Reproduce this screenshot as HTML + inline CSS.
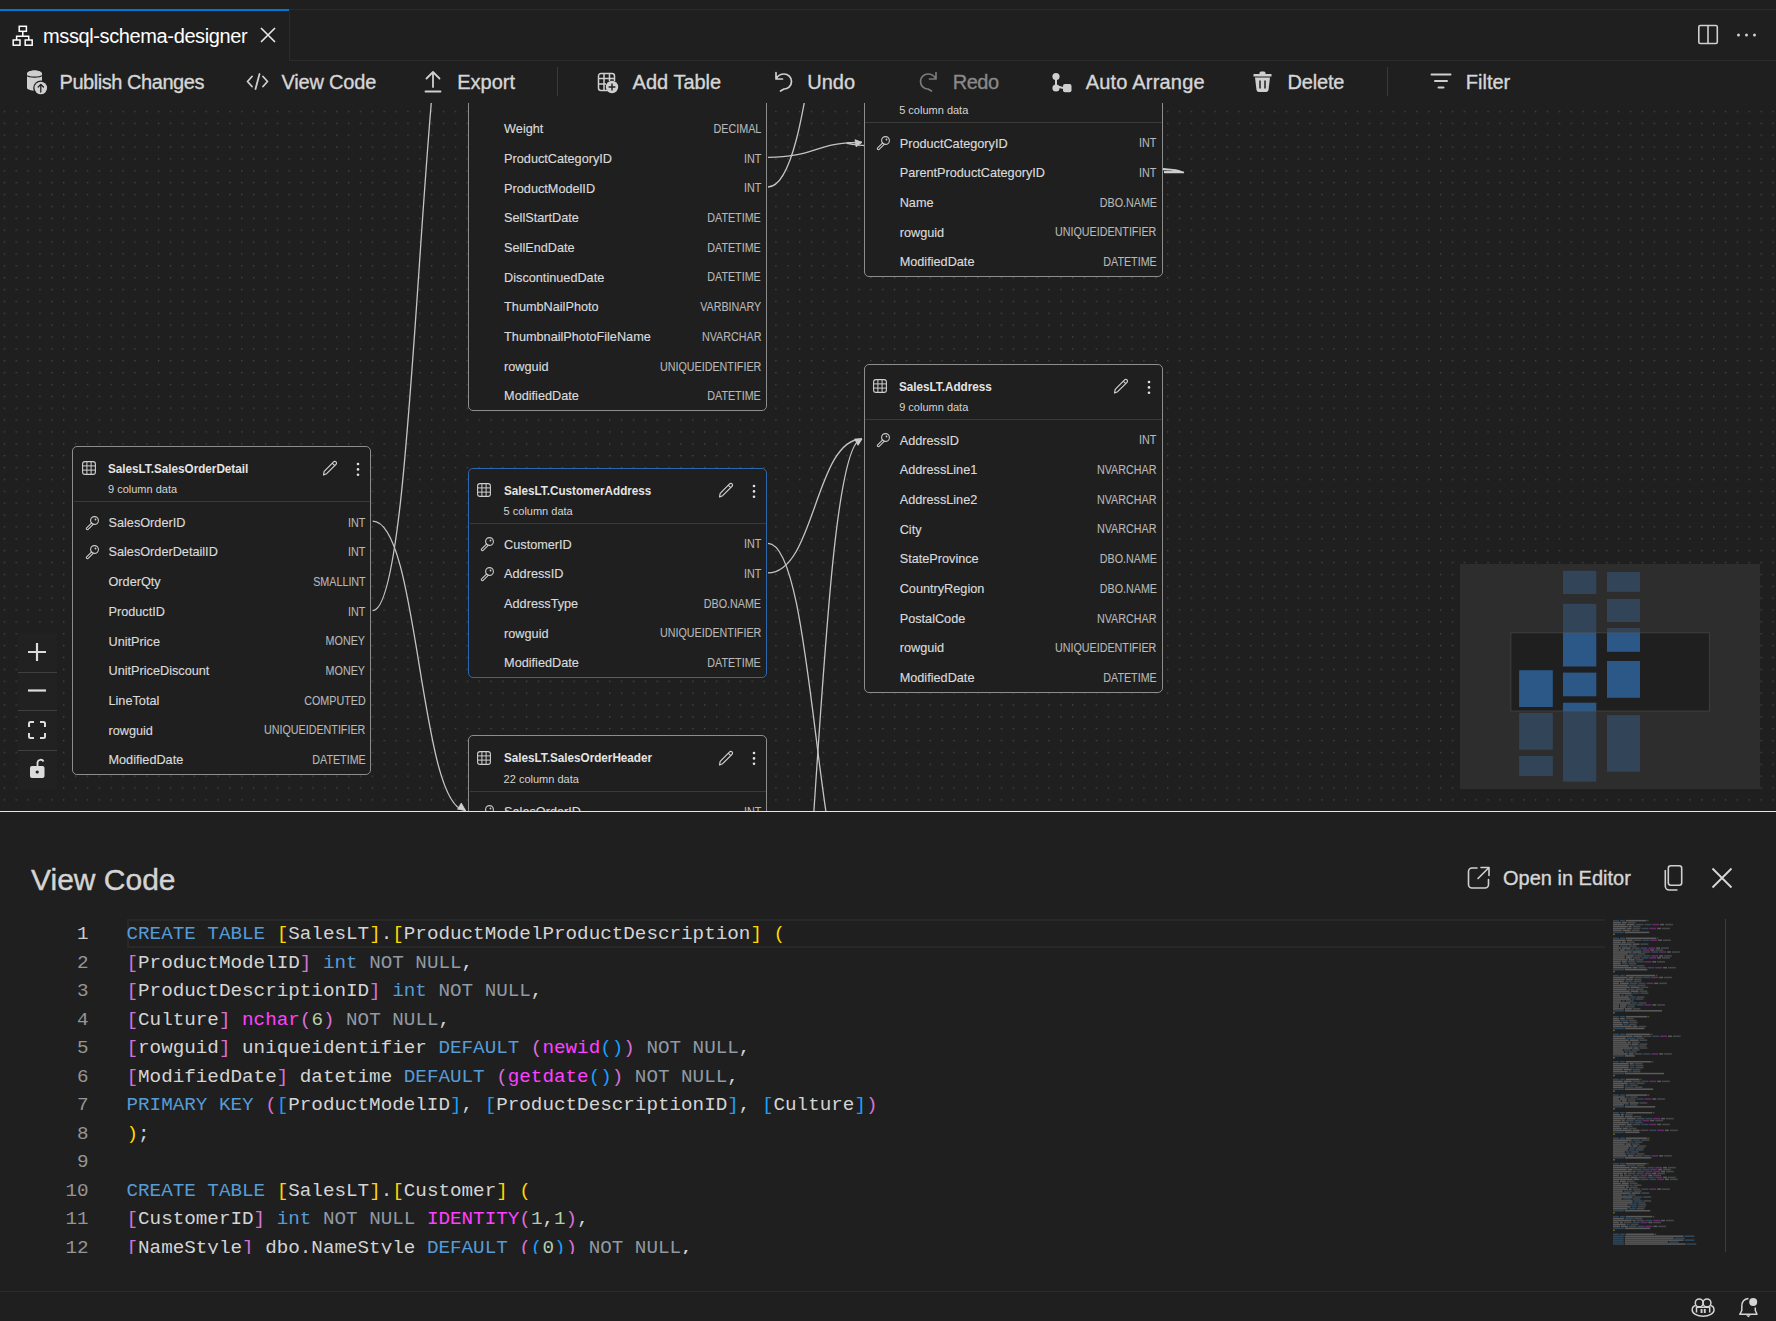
<!DOCTYPE html>
<html><head><meta charset="utf-8"><title>mssql-schema-designer</title>
<style>html,body{margin:0;padding:0}body{width:1776px;height:1321px;position:relative;overflow:hidden;background:#1f1f1f;font-family:'Liberation Sans',sans-serif}svg{overflow:visible}</style>
</head><body>
<div style="position:absolute;left:0;top:103px;width:1776px;height:708px;overflow:hidden;background:#1f1f1f">
<svg style="position:absolute;left:0;top:0" width="1776" height="708"><defs><pattern id="dots" x="3.70" y="7.80" width="11.87" height="11.87" patternUnits="userSpaceOnUse"><rect x="0.1" y="0.1" width="1.2" height="1.2" fill="#505050"/></pattern></defs><rect width="100%" height="100%" fill="url(#dots)"/></svg>
<svg style="position:absolute;left:0;top:0" width="1776" height="708"><path d="M372.7,418.20000000000005 C419.35,418.20000000000005 419.35,707.5 466,707.5" stroke="#c4c4c4" stroke-width="1.3" fill="none"/><path d="M372.7,507.6 C419.35,507.6 419.35,-183.3 466,-183.3" stroke="#c4c4c4" stroke-width="1.3" fill="none"/><path d="M768,54.30000000000001 C815.0,54.30000000000001 815.0,39.30000000000001 862,39.30000000000001" stroke="#c4c4c4" stroke-width="1.3" fill="none"/><path d="M862.00,39.30 L856.11,43.82 L855.04,36.70 Z" fill="#cfcfcf" stroke="#cfcfcf" stroke-width="0.8" stroke-linejoin="round"/><path d="M768,84 C816.0,84 816.0,-223 864,-223" stroke="#c4c4c4" stroke-width="1.3" fill="none"/><path d="M1164,68.69999999999999 C1272.6134199811422,68.69999999999999 753.3865800188577,39.30000000000001 862,39.30000000000001" stroke="#c4c4c4" stroke-width="1.3" fill="none"/><path d="M768,440.29999999999995 C816.0,440.29999999999995 816.0,827 864,827" stroke="#c4c4c4" stroke-width="1.3" fill="none"/><path d="M768,469.9 C815.0,469.9 815.0,336 862,336" stroke="#c4c4c4" stroke-width="1.3" fill="none"/><path d="M862.00,336.00 L858.04,342.29 L854.57,335.98 Z" fill="#cfcfcf" stroke="#cfcfcf" stroke-width="0.8" stroke-linejoin="round"/><path d="M768,1047 C815.0,1047 815.0,336 862,336" stroke="#c4c4c4" stroke-width="1.3" fill="none"/><path d="M465.00,706.50 L457.57,706.24 L461.28,700.07 Z" fill="#cfcfcf" stroke="#cfcfcf" stroke-width="0.8" stroke-linejoin="round"/></svg>
<div style="position:absolute;left:468.0px;top:-258.50px;width:296.6px;height:564.80px;border:1px solid #8d8d8d;border-radius:5px;background:#1f1f1f"></div>
<svg style="position:absolute;left:477.1px;top:-243.3px;" width="14" height="14" viewBox="0 0 14 14"><rect x="0.6" y="0.6" width="12.8" height="12.8" rx="2.4" fill="none" stroke="#d0d0d0" stroke-width="1.1"/><path d="M4.9,0.8 V13.2 M9.1,0.8 V13.2 M0.8,4.9 H13.2 M0.8,9.1 H13.2" stroke="#d0d0d0" stroke-width="1.0"/></svg>
<div style="position:absolute;top:-242.65px;font:700 13px 'Liberation Sans',sans-serif;line-height:1;color:#e4e4e4;white-space:pre;left:503.60px;transform:scaleX(0.9);transform-origin:0 50%;">SalesLT.Product</div>
<div style="position:absolute;top:-220.15px;font:400 11px 'Liberation Sans',sans-serif;line-height:1;color:#d4d4d4;white-space:pre;left:503.60px;">17 column data</div>
<div style="position:absolute;left:469.6px;top:-203.30px;width:296px;height:1px;background:#3a3a3a;"></div>
<svg style="position:absolute;left:717.6px;top:-244.3px;" width="17" height="17" viewBox="0 0 17 17"><path d="M1.5,15 L2.2,11.3 L11.6,1.9 A1.6,1.6 0 0 1 14,4.3 L4.6,13.7 Z M10.3,3.2 L12.7,5.6" fill="none" stroke="#d0d0d0" stroke-width="1.2" stroke-linejoin="round"/></svg>
<svg style="position:absolute;left:751.6px;top:-242.8px;" width="4" height="15" viewBox="0 0 4 15"><circle cx="2" cy="2" r="1.3" fill="#e0e0e0"/><circle cx="2" cy="7.4" r="1.3" fill="#e0e0e0"/><circle cx="2" cy="12.8" r="1.3" fill="#e0e0e0"/></svg>
<div style="position:absolute;top:20.11px;font:400 12.7px 'Liberation Sans',sans-serif;line-height:1;color:#dadada;white-space:pre;left:504.10px;-webkit-text-stroke:0.15px #dadada;">Weight</div>
<div style="position:absolute;top:19.90px;font:400 12px 'Liberation Sans',sans-serif;line-height:1;color:#b8b8b8;white-space:pre;right:1014.90px;transform:scaleX(0.895);transform-origin:100% 50%;-webkit-text-stroke:0.1px #b8b8b8;">DECIMAL</div>
<div style="position:absolute;top:49.80px;font:400 12.7px 'Liberation Sans',sans-serif;line-height:1;color:#dadada;white-space:pre;left:504.10px;-webkit-text-stroke:0.15px #dadada;">ProductCategoryID</div>
<div style="position:absolute;top:49.60px;font:400 12px 'Liberation Sans',sans-serif;line-height:1;color:#b8b8b8;white-space:pre;right:1014.90px;transform:scaleX(0.895);transform-origin:100% 50%;-webkit-text-stroke:0.1px #b8b8b8;">INT</div>
<div style="position:absolute;top:79.51px;font:400 12.7px 'Liberation Sans',sans-serif;line-height:1;color:#dadada;white-space:pre;left:504.10px;-webkit-text-stroke:0.15px #dadada;">ProductModelID</div>
<div style="position:absolute;top:79.30px;font:400 12px 'Liberation Sans',sans-serif;line-height:1;color:#b8b8b8;white-space:pre;right:1014.90px;transform:scaleX(0.895);transform-origin:100% 50%;-webkit-text-stroke:0.1px #b8b8b8;">INT</div>
<div style="position:absolute;top:109.20px;font:400 12.7px 'Liberation Sans',sans-serif;line-height:1;color:#dadada;white-space:pre;left:504.10px;-webkit-text-stroke:0.15px #dadada;">SellStartDate</div>
<div style="position:absolute;top:109.00px;font:400 12px 'Liberation Sans',sans-serif;line-height:1;color:#b8b8b8;white-space:pre;right:1014.90px;transform:scaleX(0.895);transform-origin:100% 50%;-webkit-text-stroke:0.1px #b8b8b8;">DATETIME</div>
<div style="position:absolute;top:138.91px;font:400 12.7px 'Liberation Sans',sans-serif;line-height:1;color:#dadada;white-space:pre;left:504.10px;-webkit-text-stroke:0.15px #dadada;">SellEndDate</div>
<div style="position:absolute;top:138.70px;font:400 12px 'Liberation Sans',sans-serif;line-height:1;color:#b8b8b8;white-space:pre;right:1014.90px;transform:scaleX(0.895);transform-origin:100% 50%;-webkit-text-stroke:0.1px #b8b8b8;">DATETIME</div>
<div style="position:absolute;top:168.60px;font:400 12.7px 'Liberation Sans',sans-serif;line-height:1;color:#dadada;white-space:pre;left:504.10px;-webkit-text-stroke:0.15px #dadada;">DiscontinuedDate</div>
<div style="position:absolute;top:168.40px;font:400 12px 'Liberation Sans',sans-serif;line-height:1;color:#b8b8b8;white-space:pre;right:1014.90px;transform:scaleX(0.895);transform-origin:100% 50%;-webkit-text-stroke:0.1px #b8b8b8;">DATETIME</div>
<div style="position:absolute;top:198.30px;font:400 12.7px 'Liberation Sans',sans-serif;line-height:1;color:#dadada;white-space:pre;left:504.10px;-webkit-text-stroke:0.15px #dadada;">ThumbNailPhoto</div>
<div style="position:absolute;top:198.10px;font:400 12px 'Liberation Sans',sans-serif;line-height:1;color:#b8b8b8;white-space:pre;right:1014.90px;transform:scaleX(0.895);transform-origin:100% 50%;-webkit-text-stroke:0.1px #b8b8b8;">VARBINARY</div>
<div style="position:absolute;top:228.01px;font:400 12.7px 'Liberation Sans',sans-serif;line-height:1;color:#dadada;white-space:pre;left:504.10px;-webkit-text-stroke:0.15px #dadada;">ThumbnailPhotoFileName</div>
<div style="position:absolute;top:227.80px;font:400 12px 'Liberation Sans',sans-serif;line-height:1;color:#b8b8b8;white-space:pre;right:1014.90px;transform:scaleX(0.895);transform-origin:100% 50%;-webkit-text-stroke:0.1px #b8b8b8;">NVARCHAR</div>
<div style="position:absolute;top:257.70px;font:400 12.7px 'Liberation Sans',sans-serif;line-height:1;color:#dadada;white-space:pre;left:504.10px;-webkit-text-stroke:0.15px #dadada;">rowguid</div>
<div style="position:absolute;top:257.50px;font:400 12px 'Liberation Sans',sans-serif;line-height:1;color:#b8b8b8;white-space:pre;right:1014.90px;transform:scaleX(0.895);transform-origin:100% 50%;-webkit-text-stroke:0.1px #b8b8b8;">UNIQUEIDENTIFIER</div>
<div style="position:absolute;top:287.40px;font:400 12.7px 'Liberation Sans',sans-serif;line-height:1;color:#dadada;white-space:pre;left:504.10px;-webkit-text-stroke:0.15px #dadada;">ModifiedDate</div>
<div style="position:absolute;top:287.20px;font:400 12px 'Liberation Sans',sans-serif;line-height:1;color:#b8b8b8;white-space:pre;right:1014.90px;transform:scaleX(0.895);transform-origin:100% 50%;-webkit-text-stroke:0.1px #b8b8b8;">DATETIME</div>
<div style="position:absolute;left:864.2px;top:-36.20px;width:296.5px;height:208.40px;border:1px solid #8d8d8d;border-radius:5px;background:#1f1f1f"></div>
<svg style="position:absolute;left:872.7px;top:-21.0px;" width="14" height="14" viewBox="0 0 14 14"><rect x="0.6" y="0.6" width="12.8" height="12.8" rx="2.4" fill="none" stroke="#d0d0d0" stroke-width="1.1"/><path d="M4.9,0.8 V13.2 M9.1,0.8 V13.2 M0.8,4.9 H13.2 M0.8,9.1 H13.2" stroke="#d0d0d0" stroke-width="1.0"/></svg>
<div style="position:absolute;top:-20.35px;font:700 13px 'Liberation Sans',sans-serif;line-height:1;color:#e4e4e4;white-space:pre;left:899.20px;transform:scaleX(0.9);transform-origin:0 50%;">SalesLT.ProductCategory</div>
<div style="position:absolute;top:2.15px;font:400 11px 'Liberation Sans',sans-serif;line-height:1;color:#d4d4d4;white-space:pre;left:899.20px;">5 column data</div>
<div style="position:absolute;left:865.2px;top:19.00px;width:296.5px;height:1px;background:#3a3a3a;"></div>
<svg style="position:absolute;left:1113.2px;top:-22.0px;" width="17" height="17" viewBox="0 0 17 17"><path d="M1.5,15 L2.2,11.3 L11.6,1.9 A1.6,1.6 0 0 1 14,4.3 L4.6,13.7 Z M10.3,3.2 L12.7,5.6" fill="none" stroke="#d0d0d0" stroke-width="1.2" stroke-linejoin="round"/></svg>
<svg style="position:absolute;left:1147.2px;top:-20.5px;" width="4" height="15" viewBox="0 0 4 15"><circle cx="2" cy="2" r="1.3" fill="#e0e0e0"/><circle cx="2" cy="7.4" r="1.3" fill="#e0e0e0"/><circle cx="2" cy="12.8" r="1.3" fill="#e0e0e0"/></svg>
<svg style="position:absolute;left:875.7px;top:33.3px;" width="14" height="14" viewBox="0 0 14 14"><g fill="none" stroke="#cacaca" stroke-width="1.1" stroke-linecap="round" stroke-linejoin="round"><circle cx="9.5" cy="4.5" r="3.9"/><path d="M6.7,6.9 L1.4,12.2 A1.1,1.1 0 0 0 2.9,13.6 L8.2,8.4"/></g><circle cx="10.5" cy="3.5" r="0.9" fill="#cacaca"/></svg>
<div style="position:absolute;top:34.50px;font:400 12.7px 'Liberation Sans',sans-serif;line-height:1;color:#dadada;white-space:pre;left:899.70px;-webkit-text-stroke:0.15px #dadada;">ProductCategoryID</div>
<div style="position:absolute;top:34.30px;font:400 12px 'Liberation Sans',sans-serif;line-height:1;color:#b8b8b8;white-space:pre;right:619.30px;transform:scaleX(0.895);transform-origin:100% 50%;-webkit-text-stroke:0.1px #b8b8b8;">INT</div>
<div style="position:absolute;top:64.20px;font:400 12.7px 'Liberation Sans',sans-serif;line-height:1;color:#dadada;white-space:pre;left:899.70px;-webkit-text-stroke:0.15px #dadada;">ParentProductCategoryID</div>
<div style="position:absolute;top:64.00px;font:400 12px 'Liberation Sans',sans-serif;line-height:1;color:#b8b8b8;white-space:pre;right:619.30px;transform:scaleX(0.895);transform-origin:100% 50%;-webkit-text-stroke:0.1px #b8b8b8;">INT</div>
<div style="position:absolute;top:93.90px;font:400 12.7px 'Liberation Sans',sans-serif;line-height:1;color:#dadada;white-space:pre;left:899.70px;-webkit-text-stroke:0.15px #dadada;">Name</div>
<div style="position:absolute;top:93.70px;font:400 12px 'Liberation Sans',sans-serif;line-height:1;color:#b8b8b8;white-space:pre;right:619.30px;transform:scaleX(0.895);transform-origin:100% 50%;-webkit-text-stroke:0.1px #b8b8b8;">DBO.NAME</div>
<div style="position:absolute;top:123.60px;font:400 12.7px 'Liberation Sans',sans-serif;line-height:1;color:#dadada;white-space:pre;left:899.70px;-webkit-text-stroke:0.15px #dadada;">rowguid</div>
<div style="position:absolute;top:123.40px;font:400 12px 'Liberation Sans',sans-serif;line-height:1;color:#b8b8b8;white-space:pre;right:619.30px;transform:scaleX(0.895);transform-origin:100% 50%;-webkit-text-stroke:0.1px #b8b8b8;">UNIQUEIDENTIFIER</div>
<div style="position:absolute;top:153.31px;font:400 12.7px 'Liberation Sans',sans-serif;line-height:1;color:#dadada;white-space:pre;left:899.70px;-webkit-text-stroke:0.15px #dadada;">ModifiedDate</div>
<div style="position:absolute;top:153.10px;font:400 12px 'Liberation Sans',sans-serif;line-height:1;color:#b8b8b8;white-space:pre;right:619.30px;transform:scaleX(0.895);transform-origin:100% 50%;-webkit-text-stroke:0.1px #b8b8b8;">DATETIME</div>
<div style="position:absolute;left:864.2px;top:260.80px;width:296.5px;height:327.20px;border:1px solid #8d8d8d;border-radius:5px;background:#1f1f1f"></div>
<svg style="position:absolute;left:872.7px;top:276.0px;" width="14" height="14" viewBox="0 0 14 14"><rect x="0.6" y="0.6" width="12.8" height="12.8" rx="2.4" fill="none" stroke="#d0d0d0" stroke-width="1.1"/><path d="M4.9,0.8 V13.2 M9.1,0.8 V13.2 M0.8,4.9 H13.2 M0.8,9.1 H13.2" stroke="#d0d0d0" stroke-width="1.0"/></svg>
<div style="position:absolute;top:276.65px;font:700 13px 'Liberation Sans',sans-serif;line-height:1;color:#e4e4e4;white-space:pre;left:899.20px;transform:scaleX(0.9);transform-origin:0 50%;">SalesLT.Address</div>
<div style="position:absolute;top:299.15px;font:400 11px 'Liberation Sans',sans-serif;line-height:1;color:#d4d4d4;white-space:pre;left:899.20px;">9 column data</div>
<div style="position:absolute;left:865.2px;top:316.00px;width:296.5px;height:1px;background:#3a3a3a;"></div>
<svg style="position:absolute;left:1113.2px;top:275.0px;" width="17" height="17" viewBox="0 0 17 17"><path d="M1.5,15 L2.2,11.3 L11.6,1.9 A1.6,1.6 0 0 1 14,4.3 L4.6,13.7 Z M10.3,3.2 L12.7,5.6" fill="none" stroke="#d0d0d0" stroke-width="1.2" stroke-linejoin="round"/></svg>
<svg style="position:absolute;left:1147.2px;top:276.5px;" width="4" height="15" viewBox="0 0 4 15"><circle cx="2" cy="2" r="1.3" fill="#e0e0e0"/><circle cx="2" cy="7.4" r="1.3" fill="#e0e0e0"/><circle cx="2" cy="12.8" r="1.3" fill="#e0e0e0"/></svg>
<svg style="position:absolute;left:875.7px;top:330.3px;" width="14" height="14" viewBox="0 0 14 14"><g fill="none" stroke="#cacaca" stroke-width="1.1" stroke-linecap="round" stroke-linejoin="round"><circle cx="9.5" cy="4.5" r="3.9"/><path d="M6.7,6.9 L1.4,12.2 A1.1,1.1 0 0 0 2.9,13.6 L8.2,8.4"/></g><circle cx="10.5" cy="3.5" r="0.9" fill="#cacaca"/></svg>
<div style="position:absolute;top:331.50px;font:400 12.7px 'Liberation Sans',sans-serif;line-height:1;color:#dadada;white-space:pre;left:899.70px;-webkit-text-stroke:0.15px #dadada;">AddressID</div>
<div style="position:absolute;top:331.30px;font:400 12px 'Liberation Sans',sans-serif;line-height:1;color:#b8b8b8;white-space:pre;right:619.30px;transform:scaleX(0.895);transform-origin:100% 50%;-webkit-text-stroke:0.1px #b8b8b8;">INT</div>
<div style="position:absolute;top:361.20px;font:400 12.7px 'Liberation Sans',sans-serif;line-height:1;color:#dadada;white-space:pre;left:899.70px;-webkit-text-stroke:0.15px #dadada;">AddressLine1</div>
<div style="position:absolute;top:361.00px;font:400 12px 'Liberation Sans',sans-serif;line-height:1;color:#b8b8b8;white-space:pre;right:619.30px;transform:scaleX(0.895);transform-origin:100% 50%;-webkit-text-stroke:0.1px #b8b8b8;">NVARCHAR</div>
<div style="position:absolute;top:390.90px;font:400 12.7px 'Liberation Sans',sans-serif;line-height:1;color:#dadada;white-space:pre;left:899.70px;-webkit-text-stroke:0.15px #dadada;">AddressLine2</div>
<div style="position:absolute;top:390.70px;font:400 12px 'Liberation Sans',sans-serif;line-height:1;color:#b8b8b8;white-space:pre;right:619.30px;transform:scaleX(0.895);transform-origin:100% 50%;-webkit-text-stroke:0.1px #b8b8b8;">NVARCHAR</div>
<div style="position:absolute;top:420.60px;font:400 12.7px 'Liberation Sans',sans-serif;line-height:1;color:#dadada;white-space:pre;left:899.70px;-webkit-text-stroke:0.15px #dadada;">City</div>
<div style="position:absolute;top:420.40px;font:400 12px 'Liberation Sans',sans-serif;line-height:1;color:#b8b8b8;white-space:pre;right:619.30px;transform:scaleX(0.895);transform-origin:100% 50%;-webkit-text-stroke:0.1px #b8b8b8;">NVARCHAR</div>
<div style="position:absolute;top:450.31px;font:400 12.7px 'Liberation Sans',sans-serif;line-height:1;color:#dadada;white-space:pre;left:899.70px;-webkit-text-stroke:0.15px #dadada;">StateProvince</div>
<div style="position:absolute;top:450.10px;font:400 12px 'Liberation Sans',sans-serif;line-height:1;color:#b8b8b8;white-space:pre;right:619.30px;transform:scaleX(0.895);transform-origin:100% 50%;-webkit-text-stroke:0.1px #b8b8b8;">DBO.NAME</div>
<div style="position:absolute;top:480.00px;font:400 12.7px 'Liberation Sans',sans-serif;line-height:1;color:#dadada;white-space:pre;left:899.70px;-webkit-text-stroke:0.15px #dadada;">CountryRegion</div>
<div style="position:absolute;top:479.80px;font:400 12px 'Liberation Sans',sans-serif;line-height:1;color:#b8b8b8;white-space:pre;right:619.30px;transform:scaleX(0.895);transform-origin:100% 50%;-webkit-text-stroke:0.1px #b8b8b8;">DBO.NAME</div>
<div style="position:absolute;top:509.70px;font:400 12.7px 'Liberation Sans',sans-serif;line-height:1;color:#dadada;white-space:pre;left:899.70px;-webkit-text-stroke:0.15px #dadada;">PostalCode</div>
<div style="position:absolute;top:509.50px;font:400 12px 'Liberation Sans',sans-serif;line-height:1;color:#b8b8b8;white-space:pre;right:619.30px;transform:scaleX(0.895);transform-origin:100% 50%;-webkit-text-stroke:0.1px #b8b8b8;">NVARCHAR</div>
<div style="position:absolute;top:539.41px;font:400 12.7px 'Liberation Sans',sans-serif;line-height:1;color:#dadada;white-space:pre;left:899.70px;-webkit-text-stroke:0.15px #dadada;">rowguid</div>
<div style="position:absolute;top:539.20px;font:400 12px 'Liberation Sans',sans-serif;line-height:1;color:#b8b8b8;white-space:pre;right:619.30px;transform:scaleX(0.895);transform-origin:100% 50%;-webkit-text-stroke:0.1px #b8b8b8;">UNIQUEIDENTIFIER</div>
<div style="position:absolute;top:569.11px;font:400 12.7px 'Liberation Sans',sans-serif;line-height:1;color:#dadada;white-space:pre;left:899.70px;-webkit-text-stroke:0.15px #dadada;">ModifiedDate</div>
<div style="position:absolute;top:568.90px;font:400 12px 'Liberation Sans',sans-serif;line-height:1;color:#b8b8b8;white-space:pre;right:619.30px;transform:scaleX(0.895);transform-origin:100% 50%;-webkit-text-stroke:0.1px #b8b8b8;">DATETIME</div>
<div style="position:absolute;left:72.4px;top:343.00px;width:296.6px;height:327.20px;border:1px solid #8d8d8d;border-radius:5px;background:#1f1f1f"></div>
<svg style="position:absolute;left:81.5px;top:358.2px;" width="14" height="14" viewBox="0 0 14 14"><rect x="0.6" y="0.6" width="12.8" height="12.8" rx="2.4" fill="none" stroke="#d0d0d0" stroke-width="1.1"/><path d="M4.9,0.8 V13.2 M9.1,0.8 V13.2 M0.8,4.9 H13.2 M0.8,9.1 H13.2" stroke="#d0d0d0" stroke-width="1.0"/></svg>
<div style="position:absolute;top:358.85px;font:700 13px 'Liberation Sans',sans-serif;line-height:1;color:#e4e4e4;white-space:pre;left:108.00px;transform:scaleX(0.9);transform-origin:0 50%;">SalesLT.SalesOrderDetail</div>
<div style="position:absolute;top:381.35px;font:400 11px 'Liberation Sans',sans-serif;line-height:1;color:#d4d4d4;white-space:pre;left:108.00px;">9 column data</div>
<div style="position:absolute;left:74px;top:398.20px;width:296px;height:1px;background:#3a3a3a;"></div>
<svg style="position:absolute;left:322px;top:357.2px;" width="17" height="17" viewBox="0 0 17 17"><path d="M1.5,15 L2.2,11.3 L11.6,1.9 A1.6,1.6 0 0 1 14,4.3 L4.6,13.7 Z M10.3,3.2 L12.7,5.6" fill="none" stroke="#d0d0d0" stroke-width="1.2" stroke-linejoin="round"/></svg>
<svg style="position:absolute;left:356px;top:358.7px;" width="4" height="15" viewBox="0 0 4 15"><circle cx="2" cy="2" r="1.3" fill="#e0e0e0"/><circle cx="2" cy="7.4" r="1.3" fill="#e0e0e0"/><circle cx="2" cy="12.8" r="1.3" fill="#e0e0e0"/></svg>
<svg style="position:absolute;left:84.5px;top:412.5px;" width="14" height="14" viewBox="0 0 14 14"><g fill="none" stroke="#cacaca" stroke-width="1.1" stroke-linecap="round" stroke-linejoin="round"><circle cx="9.5" cy="4.5" r="3.9"/><path d="M6.7,6.9 L1.4,12.2 A1.1,1.1 0 0 0 2.9,13.6 L8.2,8.4"/></g><circle cx="10.5" cy="3.5" r="0.9" fill="#cacaca"/></svg>
<div style="position:absolute;top:413.70px;font:400 12.7px 'Liberation Sans',sans-serif;line-height:1;color:#dadada;white-space:pre;left:108.50px;-webkit-text-stroke:0.15px #dadada;">SalesOrderID</div>
<div style="position:absolute;top:413.50px;font:400 12px 'Liberation Sans',sans-serif;line-height:1;color:#b8b8b8;white-space:pre;right:1410.50px;transform:scaleX(0.895);transform-origin:100% 50%;-webkit-text-stroke:0.1px #b8b8b8;">INT</div>
<svg style="position:absolute;left:84.5px;top:442.2px;" width="14" height="14" viewBox="0 0 14 14"><g fill="none" stroke="#cacaca" stroke-width="1.1" stroke-linecap="round" stroke-linejoin="round"><circle cx="9.5" cy="4.5" r="3.9"/><path d="M6.7,6.9 L1.4,12.2 A1.1,1.1 0 0 0 2.9,13.6 L8.2,8.4"/></g><circle cx="10.5" cy="3.5" r="0.9" fill="#cacaca"/></svg>
<div style="position:absolute;top:443.40px;font:400 12.7px 'Liberation Sans',sans-serif;line-height:1;color:#dadada;white-space:pre;left:108.50px;-webkit-text-stroke:0.15px #dadada;">SalesOrderDetailID</div>
<div style="position:absolute;top:443.20px;font:400 12px 'Liberation Sans',sans-serif;line-height:1;color:#b8b8b8;white-space:pre;right:1410.50px;transform:scaleX(0.895);transform-origin:100% 50%;-webkit-text-stroke:0.1px #b8b8b8;">INT</div>
<div style="position:absolute;top:473.10px;font:400 12.7px 'Liberation Sans',sans-serif;line-height:1;color:#dadada;white-space:pre;left:108.50px;-webkit-text-stroke:0.15px #dadada;">OrderQty</div>
<div style="position:absolute;top:472.90px;font:400 12px 'Liberation Sans',sans-serif;line-height:1;color:#b8b8b8;white-space:pre;right:1410.50px;transform:scaleX(0.895);transform-origin:100% 50%;-webkit-text-stroke:0.1px #b8b8b8;">SMALLINT</div>
<div style="position:absolute;top:502.81px;font:400 12.7px 'Liberation Sans',sans-serif;line-height:1;color:#dadada;white-space:pre;left:108.50px;-webkit-text-stroke:0.15px #dadada;">ProductID</div>
<div style="position:absolute;top:502.60px;font:400 12px 'Liberation Sans',sans-serif;line-height:1;color:#b8b8b8;white-space:pre;right:1410.50px;transform:scaleX(0.895);transform-origin:100% 50%;-webkit-text-stroke:0.1px #b8b8b8;">INT</div>
<div style="position:absolute;top:532.50px;font:400 12.7px 'Liberation Sans',sans-serif;line-height:1;color:#dadada;white-space:pre;left:108.50px;-webkit-text-stroke:0.15px #dadada;">UnitPrice</div>
<div style="position:absolute;top:532.30px;font:400 12px 'Liberation Sans',sans-serif;line-height:1;color:#b8b8b8;white-space:pre;right:1410.50px;transform:scaleX(0.895);transform-origin:100% 50%;-webkit-text-stroke:0.1px #b8b8b8;">MONEY</div>
<div style="position:absolute;top:562.21px;font:400 12.7px 'Liberation Sans',sans-serif;line-height:1;color:#dadada;white-space:pre;left:108.50px;-webkit-text-stroke:0.15px #dadada;">UnitPriceDiscount</div>
<div style="position:absolute;top:562.00px;font:400 12px 'Liberation Sans',sans-serif;line-height:1;color:#b8b8b8;white-space:pre;right:1410.50px;transform:scaleX(0.895);transform-origin:100% 50%;-webkit-text-stroke:0.1px #b8b8b8;">MONEY</div>
<div style="position:absolute;top:591.91px;font:400 12.7px 'Liberation Sans',sans-serif;line-height:1;color:#dadada;white-space:pre;left:108.50px;-webkit-text-stroke:0.15px #dadada;">LineTotal</div>
<div style="position:absolute;top:591.70px;font:400 12px 'Liberation Sans',sans-serif;line-height:1;color:#b8b8b8;white-space:pre;right:1410.50px;transform:scaleX(0.895);transform-origin:100% 50%;-webkit-text-stroke:0.1px #b8b8b8;">COMPUTED</div>
<div style="position:absolute;top:621.61px;font:400 12.7px 'Liberation Sans',sans-serif;line-height:1;color:#dadada;white-space:pre;left:108.50px;-webkit-text-stroke:0.15px #dadada;">rowguid</div>
<div style="position:absolute;top:621.40px;font:400 12px 'Liberation Sans',sans-serif;line-height:1;color:#b8b8b8;white-space:pre;right:1410.50px;transform:scaleX(0.895);transform-origin:100% 50%;-webkit-text-stroke:0.1px #b8b8b8;">UNIQUEIDENTIFIER</div>
<div style="position:absolute;top:651.31px;font:400 12.7px 'Liberation Sans',sans-serif;line-height:1;color:#dadada;white-space:pre;left:108.50px;-webkit-text-stroke:0.15px #dadada;">ModifiedDate</div>
<div style="position:absolute;top:651.10px;font:400 12px 'Liberation Sans',sans-serif;line-height:1;color:#b8b8b8;white-space:pre;right:1410.50px;transform:scaleX(0.895);transform-origin:100% 50%;-webkit-text-stroke:0.1px #b8b8b8;">DATETIME</div>
<div style="position:absolute;left:468.0px;top:364.80px;width:296.6px;height:208.40px;border:1px solid #2b68ad;border-radius:5px;background:#1f1f1f"></div>
<svg style="position:absolute;left:477.1px;top:380.0px;" width="14" height="14" viewBox="0 0 14 14"><rect x="0.6" y="0.6" width="12.8" height="12.8" rx="2.4" fill="none" stroke="#d0d0d0" stroke-width="1.1"/><path d="M4.9,0.8 V13.2 M9.1,0.8 V13.2 M0.8,4.9 H13.2 M0.8,9.1 H13.2" stroke="#d0d0d0" stroke-width="1.0"/></svg>
<div style="position:absolute;top:380.65px;font:700 13px 'Liberation Sans',sans-serif;line-height:1;color:#e4e4e4;white-space:pre;left:503.60px;transform:scaleX(0.9);transform-origin:0 50%;">SalesLT.CustomerAddress</div>
<div style="position:absolute;top:403.15px;font:400 11px 'Liberation Sans',sans-serif;line-height:1;color:#d4d4d4;white-space:pre;left:503.60px;">5 column data</div>
<div style="position:absolute;left:469.6px;top:420.00px;width:296px;height:1px;background:#3a3a3a;"></div>
<svg style="position:absolute;left:717.6px;top:379.0px;" width="17" height="17" viewBox="0 0 17 17"><path d="M1.5,15 L2.2,11.3 L11.6,1.9 A1.6,1.6 0 0 1 14,4.3 L4.6,13.7 Z M10.3,3.2 L12.7,5.6" fill="none" stroke="#d0d0d0" stroke-width="1.2" stroke-linejoin="round"/></svg>
<svg style="position:absolute;left:751.6px;top:380.5px;" width="4" height="15" viewBox="0 0 4 15"><circle cx="2" cy="2" r="1.3" fill="#e0e0e0"/><circle cx="2" cy="7.4" r="1.3" fill="#e0e0e0"/><circle cx="2" cy="12.8" r="1.3" fill="#e0e0e0"/></svg>
<svg style="position:absolute;left:480.1px;top:434.3px;" width="14" height="14" viewBox="0 0 14 14"><g fill="none" stroke="#cacaca" stroke-width="1.1" stroke-linecap="round" stroke-linejoin="round"><circle cx="9.5" cy="4.5" r="3.9"/><path d="M6.7,6.9 L1.4,12.2 A1.1,1.1 0 0 0 2.9,13.6 L8.2,8.4"/></g><circle cx="10.5" cy="3.5" r="0.9" fill="#cacaca"/></svg>
<div style="position:absolute;top:435.50px;font:400 12.7px 'Liberation Sans',sans-serif;line-height:1;color:#dadada;white-space:pre;left:504.10px;-webkit-text-stroke:0.15px #dadada;">CustomerID</div>
<div style="position:absolute;top:435.30px;font:400 12px 'Liberation Sans',sans-serif;line-height:1;color:#b8b8b8;white-space:pre;right:1014.90px;transform:scaleX(0.895);transform-origin:100% 50%;-webkit-text-stroke:0.1px #b8b8b8;">INT</div>
<svg style="position:absolute;left:480.1px;top:464.0px;" width="14" height="14" viewBox="0 0 14 14"><g fill="none" stroke="#cacaca" stroke-width="1.1" stroke-linecap="round" stroke-linejoin="round"><circle cx="9.5" cy="4.5" r="3.9"/><path d="M6.7,6.9 L1.4,12.2 A1.1,1.1 0 0 0 2.9,13.6 L8.2,8.4"/></g><circle cx="10.5" cy="3.5" r="0.9" fill="#cacaca"/></svg>
<div style="position:absolute;top:465.20px;font:400 12.7px 'Liberation Sans',sans-serif;line-height:1;color:#dadada;white-space:pre;left:504.10px;-webkit-text-stroke:0.15px #dadada;">AddressID</div>
<div style="position:absolute;top:465.00px;font:400 12px 'Liberation Sans',sans-serif;line-height:1;color:#b8b8b8;white-space:pre;right:1014.90px;transform:scaleX(0.895);transform-origin:100% 50%;-webkit-text-stroke:0.1px #b8b8b8;">INT</div>
<div style="position:absolute;top:494.90px;font:400 12.7px 'Liberation Sans',sans-serif;line-height:1;color:#dadada;white-space:pre;left:504.10px;-webkit-text-stroke:0.15px #dadada;">AddressType</div>
<div style="position:absolute;top:494.70px;font:400 12px 'Liberation Sans',sans-serif;line-height:1;color:#b8b8b8;white-space:pre;right:1014.90px;transform:scaleX(0.895);transform-origin:100% 50%;-webkit-text-stroke:0.1px #b8b8b8;">DBO.NAME</div>
<div style="position:absolute;top:524.61px;font:400 12.7px 'Liberation Sans',sans-serif;line-height:1;color:#dadada;white-space:pre;left:504.10px;-webkit-text-stroke:0.15px #dadada;">rowguid</div>
<div style="position:absolute;top:524.40px;font:400 12px 'Liberation Sans',sans-serif;line-height:1;color:#b8b8b8;white-space:pre;right:1014.90px;transform:scaleX(0.895);transform-origin:100% 50%;-webkit-text-stroke:0.1px #b8b8b8;">UNIQUEIDENTIFIER</div>
<div style="position:absolute;top:554.31px;font:400 12.7px 'Liberation Sans',sans-serif;line-height:1;color:#dadada;white-space:pre;left:504.10px;-webkit-text-stroke:0.15px #dadada;">ModifiedDate</div>
<div style="position:absolute;top:554.10px;font:400 12px 'Liberation Sans',sans-serif;line-height:1;color:#b8b8b8;white-space:pre;right:1014.90px;transform:scaleX(0.895);transform-origin:100% 50%;-webkit-text-stroke:0.1px #b8b8b8;">DATETIME</div>
<div style="position:absolute;left:468.0px;top:632.30px;width:296.6px;height:119.30px;border:1px solid #8d8d8d;border-radius:5px;background:#1f1f1f"></div>
<svg style="position:absolute;left:477.1px;top:647.5px;" width="14" height="14" viewBox="0 0 14 14"><rect x="0.6" y="0.6" width="12.8" height="12.8" rx="2.4" fill="none" stroke="#d0d0d0" stroke-width="1.1"/><path d="M4.9,0.8 V13.2 M9.1,0.8 V13.2 M0.8,4.9 H13.2 M0.8,9.1 H13.2" stroke="#d0d0d0" stroke-width="1.0"/></svg>
<div style="position:absolute;top:648.15px;font:700 13px 'Liberation Sans',sans-serif;line-height:1;color:#e4e4e4;white-space:pre;left:503.60px;transform:scaleX(0.9);transform-origin:0 50%;">SalesLT.SalesOrderHeader</div>
<div style="position:absolute;top:670.65px;font:400 11px 'Liberation Sans',sans-serif;line-height:1;color:#d4d4d4;white-space:pre;left:503.60px;">22 column data</div>
<div style="position:absolute;left:469.6px;top:687.50px;width:296px;height:1px;background:#3a3a3a;"></div>
<svg style="position:absolute;left:717.6px;top:646.5px;" width="17" height="17" viewBox="0 0 17 17"><path d="M1.5,15 L2.2,11.3 L11.6,1.9 A1.6,1.6 0 0 1 14,4.3 L4.6,13.7 Z M10.3,3.2 L12.7,5.6" fill="none" stroke="#d0d0d0" stroke-width="1.2" stroke-linejoin="round"/></svg>
<svg style="position:absolute;left:751.6px;top:648px;" width="4" height="15" viewBox="0 0 4 15"><circle cx="2" cy="2" r="1.3" fill="#e0e0e0"/><circle cx="2" cy="7.4" r="1.3" fill="#e0e0e0"/><circle cx="2" cy="12.8" r="1.3" fill="#e0e0e0"/></svg>
<svg style="position:absolute;left:480.1px;top:701.8px;" width="14" height="14" viewBox="0 0 14 14"><g fill="none" stroke="#cacaca" stroke-width="1.1" stroke-linecap="round" stroke-linejoin="round"><circle cx="9.5" cy="4.5" r="3.9"/><path d="M6.7,6.9 L1.4,12.2 A1.1,1.1 0 0 0 2.9,13.6 L8.2,8.4"/></g><circle cx="10.5" cy="3.5" r="0.9" fill="#cacaca"/></svg>
<div style="position:absolute;top:703.00px;font:400 12.7px 'Liberation Sans',sans-serif;line-height:1;color:#dadada;white-space:pre;left:504.10px;-webkit-text-stroke:0.15px #dadada;">SalesOrderID</div>
<div style="position:absolute;top:702.80px;font:400 12px 'Liberation Sans',sans-serif;line-height:1;color:#b8b8b8;white-space:pre;right:1014.90px;transform:scaleX(0.895);transform-origin:100% 50%;-webkit-text-stroke:0.1px #b8b8b8;">INT</div>
<div style="position:absolute;top:732.71px;font:400 12.7px 'Liberation Sans',sans-serif;line-height:1;color:#dadada;white-space:pre;left:504.10px;-webkit-text-stroke:0.15px #dadada;">RevisionNumber</div>
<div style="position:absolute;top:732.50px;font:400 12px 'Liberation Sans',sans-serif;line-height:1;color:#b8b8b8;white-space:pre;right:1014.90px;transform:scaleX(0.895);transform-origin:100% 50%;-webkit-text-stroke:0.1px #b8b8b8;">TINYINT</div>
<svg style="position:absolute;left:1160px;top:57px" width="30" height="20"><path d="M3,9.5 C12,9.5 20,11 24,12.5 M4,12.5 L24,12.5" stroke="#d0d0d0" stroke-width="1.4" fill="none"/></svg>
<div style="position:absolute;left:18px;top:530px;width:39px;height:156px;background:#212121"></div>
<div style="position:absolute;left:18px;top:568.5px;width:39px;height:1px;background:#3f3f3f;"></div>
<div style="position:absolute;left:18px;top:607.4px;width:39px;height:1px;background:#3f3f3f;"></div>
<div style="position:absolute;left:18px;top:646.5px;width:39px;height:1px;background:#3f3f3f;"></div>
<svg style="position:absolute;left:28px;top:540px;" width="18" height="18" viewBox="0 0 18 18"><path d="M9,0 V18 M0,9 H18" stroke="#dcdcdc" stroke-width="2.2"/></svg>
<svg style="position:absolute;left:28px;top:578px;" width="18" height="18" viewBox="0 0 18 18"><path d="M0,9.5 H18" stroke="#dcdcdc" stroke-width="2.2"/></svg>
<svg style="position:absolute;left:28px;top:617.5px;" width="18" height="18" viewBox="0 0 18 18"><path d="M1,6 V2.5 A1.5,1.5 0 0 1 2.5,1 H6 M12,1 H15.5 A1.5,1.5 0 0 1 17,2.5 V6 M17,12 V15.5 A1.5,1.5 0 0 1 15.5,17 H12 M6,17 H2.5 A1.5,1.5 0 0 1 1,15.5 V12" fill="none" stroke="#dcdcdc" stroke-width="2"/></svg>
<svg style="position:absolute;left:28px;top:655px;" width="18" height="22" viewBox="0 0 18 22"><path d="M9.5,8 V4.5 A3.2,3.2 0 0 1 15.5,3.5" fill="none" stroke="#dcdcdc" stroke-width="1.8"/><rect x="2" y="8" width="14.5" height="12" rx="2" fill="#dcdcdc"/><circle cx="9.2" cy="14" r="1.6" fill="#212121"/></svg>
<svg style="position:absolute;left:1460px;top:461px" width="300" height="225"><rect x="0" y="0" width="300" height="225" fill="#1f1f1f"/><rect x="59.1" y="106.2" width="33.7" height="36.8" fill="#2c5887"/><rect x="59.1" y="148.9" width="33.7" height="36.8" fill="#2c5887"/><rect x="59.1" y="192.0" width="33.7" height="20.0" fill="#2c5887"/><rect x="103.0" y="6.8" width="33.3" height="23.2" fill="#2c5887"/><rect x="103.0" y="39.8" width="33.3" height="62.7" fill="#2c5887"/><rect x="103.0" y="108.6" width="33.3" height="23.7" fill="#2c5887"/><rect x="103.0" y="138.7" width="33.3" height="78.9" fill="#2c5887"/><rect x="147.0" y="8.0" width="33.0" height="19.9" fill="#2c5887"/><rect x="147.0" y="35.0" width="33.0" height="23.0" fill="#2c5887"/><rect x="147.0" y="64.0" width="33.0" height="23.8" fill="#2c5887"/><rect x="147.0" y="97.0" width="33.0" height="36.8" fill="#2c5887"/><rect x="147.0" y="151.1" width="33.0" height="56.6" fill="#2c5887"/><path d="M0,0 H300 V225 H0 Z M50.90000000000009,68.79999999999995 V147 H249.4000000000001 V68.79999999999995 Z" fill="rgba(55,55,55,0.6)" fill-rule="evenodd"/><rect x="50.90000000000009" y="68.79999999999995" width="198.5" height="78.20000000000005" fill="none" stroke="rgba(90,90,90,0.45)" stroke-width="1"/></svg>
</div>
<div style="position:absolute;left:0px;top:810.5px;width:1776px;height:1.5px;background:#e6e6e6;"></div>
<div style="position:absolute;left:289px;top:8.5px;width:1487px;height:1px;background:#2b2b2b;"></div>
<div style="position:absolute;left:0px;top:9px;width:289px;height:1.5px;background:#0078d4;"></div>
<div style="position:absolute;left:289px;top:9px;width:1px;height:52px;background:#2b2b2b;"></div>
<div style="position:absolute;left:290px;top:60px;width:1486px;height:1px;background:#2b2b2b;"></div>
<svg style="position:absolute;left:12px;top:25px;" width="22" height="22" viewBox="0 0 22 22"><g fill="none" stroke="#ffffff" stroke-width="1.5"><rect x="7.2" y="1.3" width="7.2" height="5"/><rect x="1.2" y="15" width="6.8" height="5.2"/><rect x="13.2" y="15" width="7" height="5.2"/><path d="M10.8,6.3 V11.2 M4.6,15 V11.2 H16.7 V15"/></g></svg>
<div style="position:absolute;top:26.00px;font:400 20px 'Liberation Sans',sans-serif;line-height:1;color:#ffffff;white-space:pre;letter-spacing:-0.38px;left:43.00px;">mssql-schema-designer</div>
<svg style="position:absolute;left:259px;top:26px;" width="18" height="18" viewBox="0 0 18 18"><path d="M2,2 L16,16 M16,2 L2,16" stroke="#e8e8e8" stroke-width="1.6"/></svg>
<svg style="position:absolute;left:1696px;top:23px;" width="24" height="23" viewBox="0 0 24 23"><rect x="2.8" y="2.5" width="18.5" height="18" rx="1.5" fill="none" stroke="#d0d0d0" stroke-width="1.6"/><path d="M12,2.5 V20.5" stroke="#d0d0d0" stroke-width="1.6"/></svg>
<svg style="position:absolute;left:1735px;top:31px;" width="24" height="8" viewBox="0 0 24 8"><circle cx="3.5" cy="4" r="1.5" fill="#d0d0d0"/><circle cx="11.5" cy="4" r="1.5" fill="#d0d0d0"/><circle cx="19.5" cy="4" r="1.5" fill="#d0d0d0"/></svg>
<div style="position:absolute;top:71.80px;font:400 20px 'Liberation Sans',sans-serif;line-height:1;color:#d6d6d6;white-space:pre;letter-spacing:-0.45px;left:59.50px;-webkit-text-stroke:0.35px #d6d6d6;">Publish Changes</div>
<div style="position:absolute;top:71.80px;font:400 20px 'Liberation Sans',sans-serif;line-height:1;color:#d6d6d6;white-space:pre;letter-spacing:-0.2px;left:281.50px;-webkit-text-stroke:0.35px #d6d6d6;">View Code</div>
<div style="position:absolute;top:71.80px;font:400 20px 'Liberation Sans',sans-serif;line-height:1;color:#d6d6d6;white-space:pre;left:457.20px;-webkit-text-stroke:0.35px #d6d6d6;">Export</div>
<div style="position:absolute;top:71.80px;font:400 20px 'Liberation Sans',sans-serif;line-height:1;color:#d6d6d6;white-space:pre;left:632.60px;-webkit-text-stroke:0.35px #d6d6d6;">Add Table</div>
<div style="position:absolute;top:71.80px;font:400 20px 'Liberation Sans',sans-serif;line-height:1;color:#d6d6d6;white-space:pre;left:807.30px;-webkit-text-stroke:0.35px #d6d6d6;">Undo</div>
<div style="position:absolute;top:71.80px;font:400 20px 'Liberation Sans',sans-serif;line-height:1;color:#8a8a8a;white-space:pre;letter-spacing:-0.5px;left:952.80px;-webkit-text-stroke:0.3px #8a8a8a;">Redo</div>
<div style="position:absolute;top:71.80px;font:400 20px 'Liberation Sans',sans-serif;line-height:1;color:#d6d6d6;white-space:pre;letter-spacing:0.2px;left:1085.70px;-webkit-text-stroke:0.35px #d6d6d6;">Auto Arrange</div>
<div style="position:absolute;top:71.80px;font:400 20px 'Liberation Sans',sans-serif;line-height:1;color:#d6d6d6;white-space:pre;letter-spacing:-0.2px;left:1287.60px;-webkit-text-stroke:0.35px #d6d6d6;">Delete</div>
<div style="position:absolute;top:71.80px;font:400 20px 'Liberation Sans',sans-serif;line-height:1;color:#d6d6d6;white-space:pre;left:1465.80px;-webkit-text-stroke:0.35px #d6d6d6;">Filter</div>
<div style="position:absolute;left:556.5px;top:67.3px;width:1px;height:29px;background:#3a3a3a;"></div>
<div style="position:absolute;left:1386.5px;top:67px;width:1px;height:29px;background:#3a3a3a;"></div>
<svg style="position:absolute;left:26px;top:70px;" width="24" height="26" viewBox="0 0 24 26"><path d="M1,3.8 C1,1.6 5,0.4 8.5,0.4 C12,0.4 16,1.6 16,3.8 V13 A8,8 0 0 0 9.5,20.8 C5,20.6 1,19.6 1,17.8 Z" fill="#cfcfcf"/><ellipse cx="8.5" cy="3.8" rx="7.5" ry="3.2" fill="#cfcfcf"/><path d="M1.2,5.6 C3,7.6 14,7.6 15.8,5.6" fill="none" stroke="#1f1f1f" stroke-width="1.1"/><circle cx="14.8" cy="18" r="7.6" fill="#1f1f1f"/><circle cx="14.8" cy="18" r="6.3" fill="#cfcfcf"/><path d="M14.8,22 V14.6 M12.2,17 L14.8,14.4 L17.4,17" fill="none" stroke="#1f1f1f" stroke-width="1.3" stroke-linecap="round" stroke-linejoin="round"/></svg>
<svg style="position:absolute;left:246px;top:73px;" width="23" height="17" viewBox="0 0 23 17"><path d="M6,3.5 L1.5,8.5 L6,13.5 M17,3.5 L21.5,8.5 L17,13.5 M13.5,1 L9.5,16" fill="none" stroke="#cfcfcf" stroke-width="1.8" stroke-linecap="round" stroke-linejoin="round"/></svg>
<svg style="position:absolute;left:423px;top:70px;" width="20" height="24" viewBox="0 0 20 24"><path d="M10,2 V17 M3.5,8.5 L10,2 L16.5,8.5 M2.5,21.5 H17.5" fill="none" stroke="#cfcfcf" stroke-width="1.8" stroke-linecap="round" stroke-linejoin="round"/></svg>
<svg style="position:absolute;left:597px;top:72px;" width="24" height="22" viewBox="0 0 24 22"><g fill="none" stroke="#cfcfcf" stroke-width="1.5"><path d="M10,18.5 H4 A2.5,2.5 0 0 1 1.5,16 V4 A2.5,2.5 0 0 1 4,1.5 H15 A2.5,2.5 0 0 1 17.5,4 V9"/><path d="M1.5,6.5 H17.5 M1.5,12 H9 M7,1.5 V18.5 M12.5,1.5 V9"/></g><circle cx="15" cy="15" r="6.2" fill="#cfcfcf"/><path d="M15,11.6 V18.4 M11.6,15 H18.4" stroke="#1f1f1f" stroke-width="1.4"/></svg>
<svg style="position:absolute;left:773px;top:71px;" width="22" height="22" viewBox="0 0 22 22"><path d="M3,1.5 V8 H9.5 M3.3,7.5 C5,4.5 8,3 11,3 A7.5,7.5 0 0 1 11,18 L7.5,20" fill="none" stroke="#cfcfcf" stroke-width="1.7" stroke-linecap="round" stroke-linejoin="round"/></svg>
<svg style="position:absolute;left:917px;top:71px;" width="22" height="22" viewBox="0 0 22 22"><path d="M19,1.5 V8 H12.5 M18.7,7.5 C17,4.5 14,3 11,3 A7.5,7.5 0 0 0 11,18 L14.5,20" fill="none" stroke="#7a7a7a" stroke-width="1.7" stroke-linecap="round" stroke-linejoin="round"/></svg>
<svg style="position:absolute;left:1051px;top:72px;" width="22" height="21" viewBox="0 0 22 21"><circle cx="5" cy="4.5" r="3.6" fill="#cfcfcf"/><path d="M5,6 V14 L12,16" stroke="#cfcfcf" stroke-width="2" fill="none"/><circle cx="5" cy="16" r="3.6" fill="#cfcfcf"/><rect x="12" y="12" width="8.5" height="8.2" rx="2" fill="#cfcfcf"/></svg>
<svg style="position:absolute;left:1252px;top:71px;" width="22" height="22" viewBox="0 0 22 22"><path d="M7.5,3 V2 A1.5,1.5 0 0 1 9,0.5 H12 A1.5,1.5 0 0 1 13.5,2 V3 H19.5 V5.5 H1.5 V3 Z" fill="#cfcfcf"/><path d="M3,6.5 H18 L16.5,19 A2.5,2.5 0 0 1 14,21 H7 A2.5,2.5 0 0 1 4.5,19 Z" fill="#cfcfcf"/><path d="M8,9.5 V17.5 M13,9.5 V17.5" stroke="#1f1f1f" stroke-width="1.5"/></svg>
<svg style="position:absolute;left:1430px;top:72px;" width="22" height="19" viewBox="0 0 22 19"><path d="M1.5,2.5 H20.5 M5,9 H17 M8.5,15.5 H13.5" stroke="#cfcfcf" stroke-width="2" stroke-linecap="round"/></svg>
<div style="position:absolute;top:864.50px;font:400 30px 'Liberation Sans',sans-serif;line-height:1;color:#d4d4d4;white-space:pre;left:31.00px;-webkit-text-stroke:0.4px #d4d4d4;">View Code</div>
<svg style="position:absolute;left:1466px;top:865px;" width="27" height="26" viewBox="0 0 27 26"><g fill="none" stroke="#d0d0d0" stroke-width="1.6" stroke-linecap="round" stroke-linejoin="round"><path d="M11,3 H6 A3.5,3.5 0 0 0 2.5,6.5 V19.5 A3.5,3.5 0 0 0 6,23 H19 A3.5,3.5 0 0 0 22.5,19.5 V14.5"/><path d="M15,2.5 H23 V10.5 M23,2.5 L12,13.5"/></g></svg>
<div style="position:absolute;top:867.90px;font:400 20px 'Liberation Sans',sans-serif;line-height:1;color:#d6d6d6;white-space:pre;left:1503.00px;-webkit-text-stroke:0.35px #d6d6d6;">Open in Editor</div>
<svg style="position:absolute;left:1662px;top:864px;" width="24" height="28" viewBox="0 0 24 28"><g fill="none" stroke="#d0d0d0" stroke-width="1.6"><rect x="6.3" y="1.8" width="13.4" height="19.5" rx="2.5"/><path d="M3.3,6 V22 A4,4 0 0 0 7.3,26 H15.5"/></g></svg>
<svg style="position:absolute;left:1710px;top:866px;" width="24" height="24" viewBox="0 0 24 24"><path d="M2.5,2.5 L21.5,21.5 M21.5,2.5 L2.5,21.5" stroke="#d8d8d8" stroke-width="1.8"/></svg>
<div style="position:absolute;left:127px;top:919px;width:1478px;height:28.5px;box-sizing:border-box;border:2px solid #282828;border-right:none"></div>
<div style="position:absolute;top:925.37px;font:400 19.25px 'Liberation Mono',monospace;line-height:1;color:#cccccc;white-space:pre;right:1687.50px;">1</div>
<div style="position:absolute;left:126.5px;top:925.37px;font:400 19.25px 'Liberation Mono',monospace;line-height:1;white-space:pre"><span style="color:#569cd6">CREATE TABLE </span><span style="color:#ffd700">[</span><span style="color:#d4d4d4">SalesLT</span><span style="color:#ffd700">]</span><span style="color:#d4d4d4">.</span><span style="color:#ffd700">[</span><span style="color:#d4d4d4">ProductModelProductDescription</span><span style="color:#ffd700">]</span><span style="color:#d4d4d4"> </span><span style="color:#ffd700">(</span></div>
<div style="position:absolute;top:953.87px;font:400 19.25px 'Liberation Mono',monospace;line-height:1;color:#959595;white-space:pre;right:1687.50px;">2</div>
<div style="position:absolute;left:126.5px;top:953.87px;font:400 19.25px 'Liberation Mono',monospace;line-height:1;white-space:pre"><span style="color:#da70d6">[</span><span style="color:#d4d4d4">ProductModelID</span><span style="color:#da70d6">]</span><span style="color:#569cd6"> int</span><span style="color:#8f9aa5"> NOT NULL</span><span style="color:#d4d4d4">,</span></div>
<div style="position:absolute;top:982.37px;font:400 19.25px 'Liberation Mono',monospace;line-height:1;color:#959595;white-space:pre;right:1687.50px;">3</div>
<div style="position:absolute;left:126.5px;top:982.37px;font:400 19.25px 'Liberation Mono',monospace;line-height:1;white-space:pre"><span style="color:#da70d6">[</span><span style="color:#d4d4d4">ProductDescriptionID</span><span style="color:#da70d6">]</span><span style="color:#569cd6"> int</span><span style="color:#8f9aa5"> NOT NULL</span><span style="color:#d4d4d4">,</span></div>
<div style="position:absolute;top:1010.87px;font:400 19.25px 'Liberation Mono',monospace;line-height:1;color:#959595;white-space:pre;right:1687.50px;">4</div>
<div style="position:absolute;left:126.5px;top:1010.87px;font:400 19.25px 'Liberation Mono',monospace;line-height:1;white-space:pre"><span style="color:#da70d6">[</span><span style="color:#d4d4d4">Culture</span><span style="color:#da70d6">]</span><span style="color:#d4d4d4"> </span><span style="color:#ff40ff">nchar</span><span style="color:#da70d6">(</span><span style="color:#b5cea8">6</span><span style="color:#da70d6">)</span><span style="color:#8f9aa5"> NOT NULL</span><span style="color:#d4d4d4">,</span></div>
<div style="position:absolute;top:1039.37px;font:400 19.25px 'Liberation Mono',monospace;line-height:1;color:#959595;white-space:pre;right:1687.50px;">5</div>
<div style="position:absolute;left:126.5px;top:1039.37px;font:400 19.25px 'Liberation Mono',monospace;line-height:1;white-space:pre"><span style="color:#da70d6">[</span><span style="color:#d4d4d4">rowguid</span><span style="color:#da70d6">]</span><span style="color:#d4d4d4"> uniqueidentifier </span><span style="color:#569cd6">DEFAULT </span><span style="color:#da70d6">(</span><span style="color:#ff40ff">newid</span><span style="color:#179fff">()</span><span style="color:#da70d6">)</span><span style="color:#8f9aa5"> NOT NULL</span><span style="color:#d4d4d4">,</span></div>
<div style="position:absolute;top:1067.87px;font:400 19.25px 'Liberation Mono',monospace;line-height:1;color:#959595;white-space:pre;right:1687.50px;">6</div>
<div style="position:absolute;left:126.5px;top:1067.87px;font:400 19.25px 'Liberation Mono',monospace;line-height:1;white-space:pre"><span style="color:#da70d6">[</span><span style="color:#d4d4d4">ModifiedDate</span><span style="color:#da70d6">]</span><span style="color:#d4d4d4"> datetime </span><span style="color:#569cd6">DEFAULT </span><span style="color:#da70d6">(</span><span style="color:#ff40ff">getdate</span><span style="color:#179fff">()</span><span style="color:#da70d6">)</span><span style="color:#8f9aa5"> NOT NULL</span><span style="color:#d4d4d4">,</span></div>
<div style="position:absolute;top:1096.37px;font:400 19.25px 'Liberation Mono',monospace;line-height:1;color:#959595;white-space:pre;right:1687.50px;">7</div>
<div style="position:absolute;left:126.5px;top:1096.37px;font:400 19.25px 'Liberation Mono',monospace;line-height:1;white-space:pre"><span style="color:#569cd6">PRIMARY KEY </span><span style="color:#da70d6">(</span><span style="color:#179fff">[</span><span style="color:#d4d4d4">ProductModelID</span><span style="color:#179fff">]</span><span style="color:#d4d4d4">, </span><span style="color:#179fff">[</span><span style="color:#d4d4d4">ProductDescriptionID</span><span style="color:#179fff">]</span><span style="color:#d4d4d4">, </span><span style="color:#179fff">[</span><span style="color:#d4d4d4">Culture</span><span style="color:#179fff">]</span><span style="color:#da70d6">)</span></div>
<div style="position:absolute;top:1124.87px;font:400 19.25px 'Liberation Mono',monospace;line-height:1;color:#959595;white-space:pre;right:1687.50px;">8</div>
<div style="position:absolute;left:126.5px;top:1124.87px;font:400 19.25px 'Liberation Mono',monospace;line-height:1;white-space:pre"><span style="color:#ffd700">)</span><span style="color:#d4d4d4">;</span></div>
<div style="position:absolute;top:1153.37px;font:400 19.25px 'Liberation Mono',monospace;line-height:1;color:#959595;white-space:pre;right:1687.50px;">9</div>
<div style="position:absolute;left:126.5px;top:1153.37px;font:400 19.25px 'Liberation Mono',monospace;line-height:1;white-space:pre"></div>
<div style="position:absolute;top:1181.87px;font:400 19.25px 'Liberation Mono',monospace;line-height:1;color:#959595;white-space:pre;right:1687.50px;">10</div>
<div style="position:absolute;left:126.5px;top:1181.87px;font:400 19.25px 'Liberation Mono',monospace;line-height:1;white-space:pre"><span style="color:#569cd6">CREATE TABLE </span><span style="color:#ffd700">[</span><span style="color:#d4d4d4">SalesLT</span><span style="color:#ffd700">]</span><span style="color:#d4d4d4">.</span><span style="color:#ffd700">[</span><span style="color:#d4d4d4">Customer</span><span style="color:#ffd700">]</span><span style="color:#d4d4d4"> </span><span style="color:#ffd700">(</span></div>
<div style="position:absolute;top:1210.37px;font:400 19.25px 'Liberation Mono',monospace;line-height:1;color:#959595;white-space:pre;right:1687.50px;">11</div>
<div style="position:absolute;left:126.5px;top:1210.37px;font:400 19.25px 'Liberation Mono',monospace;line-height:1;white-space:pre"><span style="color:#da70d6">[</span><span style="color:#d4d4d4">CustomerID</span><span style="color:#da70d6">]</span><span style="color:#569cd6"> int</span><span style="color:#8f9aa5"> NOT NULL </span><span style="color:#ff40ff">IDENTITY</span><span style="color:#da70d6">(</span><span style="color:#b5cea8">1</span><span style="color:#d4d4d4">,</span><span style="color:#b5cea8">1</span><span style="color:#da70d6">)</span><span style="color:#d4d4d4">,</span></div>
<div style="position:absolute;top:1238.87px;font:400 19.25px 'Liberation Mono',monospace;line-height:1;color:#959595;white-space:pre;right:1687.50px;">12</div>
<div style="position:absolute;left:126.5px;top:1238.87px;font:400 19.25px 'Liberation Mono',monospace;line-height:1;white-space:pre"><span style="color:#da70d6">[</span><span style="color:#d4d4d4">NameStyle</span><span style="color:#da70d6">]</span><span style="color:#d4d4d4"> dbo.NameStyle </span><span style="color:#569cd6">DEFAULT </span><span style="color:#da70d6">(</span><span style="color:#179fff">(</span><span style="color:#b5cea8">0</span><span style="color:#179fff">)</span><span style="color:#da70d6">)</span><span style="color:#8f9aa5"> NOT NULL</span><span style="color:#d4d4d4">,</span></div>
<div style="position:absolute;left:100px;top:1254px;width:1500px;height:36px;background:#1f1f1f;"></div>
<svg style="position:absolute;left:1600px;top:915px" width="140" height="345"><rect x="13.0" y="4.90" width="5.9" height="1.5" fill="#569cd6" opacity="0.33"/><rect x="19.9" y="4.90" width="4.9" height="1.5" fill="#569cd6" opacity="0.33"/><rect x="25.8" y="4.90" width="20.6" height="1.5" fill="#d4d4d4" opacity="0.33"/><rect x="47.4" y="4.90" width="1.0" height="1.5" fill="#ffd700" opacity="0.33"/><rect x="13.0" y="6.86" width="7.8" height="1.5" fill="#d4d4d4" opacity="0.33"/><rect x="21.8" y="6.86" width="4.9" height="1.5" fill="#d4d4d4" opacity="0.33"/><rect x="27.7" y="6.86" width="7.8" height="1.5" fill="#8f9aa5" opacity="0.33"/><rect x="13.0" y="8.82" width="12.7" height="1.5" fill="#d4d4d4" opacity="0.33"/><rect x="26.7" y="8.82" width="7.8" height="1.5" fill="#d4d4d4" opacity="0.33"/><rect x="35.6" y="8.82" width="7.8" height="1.5" fill="#8f9aa5" opacity="0.33"/><rect x="44.4" y="8.82" width="6.9" height="1.5" fill="#569cd6" opacity="0.33"/><rect x="52.3" y="8.82" width="6.9" height="1.5" fill="#ff40ff" opacity="0.33"/><rect x="60.1" y="8.82" width="3.9" height="1.5" fill="#d4d4d4" opacity="0.33"/><rect x="65.1" y="8.82" width="7.8" height="1.5" fill="#8f9aa5" opacity="0.33"/><rect x="13.0" y="10.78" width="14.7" height="1.5" fill="#d4d4d4" opacity="0.33"/><rect x="28.7" y="10.78" width="2.9" height="1.5" fill="#d4d4d4" opacity="0.33"/><rect x="32.6" y="10.78" width="7.8" height="1.5" fill="#8f9aa5" opacity="0.33"/><rect x="13.0" y="12.74" width="12.7" height="1.5" fill="#d4d4d4" opacity="0.33"/><rect x="26.7" y="12.74" width="4.9" height="1.5" fill="#d4d4d4" opacity="0.33"/><rect x="32.6" y="12.74" width="7.8" height="1.5" fill="#8f9aa5" opacity="0.33"/><rect x="41.5" y="12.74" width="6.9" height="1.5" fill="#569cd6" opacity="0.33"/><rect x="49.3" y="12.74" width="6.9" height="1.5" fill="#ff40ff" opacity="0.33"/><rect x="57.2" y="12.74" width="3.9" height="1.5" fill="#d4d4d4" opacity="0.33"/><rect x="62.1" y="12.74" width="7.8" height="1.5" fill="#8f9aa5" opacity="0.33"/><rect x="13.0" y="14.70" width="8.8" height="1.5" fill="#d4d4d4" opacity="0.33"/><rect x="22.8" y="14.70" width="7.8" height="1.5" fill="#d4d4d4" opacity="0.33"/><rect x="31.7" y="14.70" width="7.8" height="1.5" fill="#8f9aa5" opacity="0.33"/><rect x="13.0" y="16.66" width="10.8" height="1.5" fill="#569cd6" opacity="0.33"/><rect x="24.8" y="16.66" width="24.5" height="1.5" fill="#d4d4d4" opacity="0.33"/><rect x="13.0" y="18.62" width="2.0" height="1.5" fill="#ffd700" opacity="0.33"/><rect x="13.0" y="22.54" width="5.9" height="1.5" fill="#569cd6" opacity="0.33"/><rect x="19.9" y="22.54" width="4.9" height="1.5" fill="#569cd6" opacity="0.33"/><rect x="25.8" y="22.54" width="30.4" height="1.5" fill="#d4d4d4" opacity="0.33"/><rect x="57.2" y="22.54" width="1.0" height="1.5" fill="#ffd700" opacity="0.33"/><rect x="13.0" y="24.50" width="12.7" height="1.5" fill="#d4d4d4" opacity="0.33"/><rect x="26.7" y="24.50" width="5.9" height="1.5" fill="#d4d4d4" opacity="0.33"/><rect x="33.6" y="24.50" width="7.8" height="1.5" fill="#8f9aa5" opacity="0.33"/><rect x="42.5" y="24.50" width="6.9" height="1.5" fill="#569cd6" opacity="0.33"/><rect x="50.3" y="24.50" width="6.9" height="1.5" fill="#ff40ff" opacity="0.33"/><rect x="58.2" y="24.50" width="3.9" height="1.5" fill="#d4d4d4" opacity="0.33"/><rect x="63.1" y="24.50" width="7.8" height="1.5" fill="#8f9aa5" opacity="0.33"/><rect x="13.0" y="26.46" width="7.8" height="1.5" fill="#d4d4d4" opacity="0.33"/><rect x="21.8" y="26.46" width="3.9" height="1.5" fill="#d4d4d4" opacity="0.33"/><rect x="26.8" y="26.46" width="7.8" height="1.5" fill="#8f9aa5" opacity="0.33"/><rect x="13.0" y="28.42" width="18.6" height="1.5" fill="#d4d4d4" opacity="0.33"/><rect x="32.6" y="28.42" width="6.9" height="1.5" fill="#d4d4d4" opacity="0.33"/><rect x="40.5" y="28.42" width="7.8" height="1.5" fill="#8f9aa5" opacity="0.33"/><rect x="13.0" y="30.38" width="5.9" height="1.5" fill="#d4d4d4" opacity="0.33"/><rect x="19.9" y="30.38" width="7.8" height="1.5" fill="#569cd6" opacity="0.33"/><rect x="28.7" y="30.38" width="7.8" height="1.5" fill="#8f9aa5" opacity="0.33"/><rect x="13.0" y="32.34" width="7.8" height="1.5" fill="#d4d4d4" opacity="0.33"/><rect x="21.8" y="32.34" width="8.8" height="1.5" fill="#d4d4d4" opacity="0.33"/><rect x="31.7" y="32.34" width="7.8" height="1.5" fill="#8f9aa5" opacity="0.33"/><rect x="40.5" y="32.34" width="6.9" height="1.5" fill="#569cd6" opacity="0.33"/><rect x="48.4" y="32.34" width="6.9" height="1.5" fill="#ff40ff" opacity="0.33"/><rect x="56.2" y="32.34" width="3.9" height="1.5" fill="#d4d4d4" opacity="0.33"/><rect x="61.1" y="32.34" width="7.8" height="1.5" fill="#8f9aa5" opacity="0.33"/><rect x="13.0" y="34.30" width="5.9" height="1.5" fill="#d4d4d4" opacity="0.33"/><rect x="19.9" y="34.30" width="4.9" height="1.5" fill="#d4d4d4" opacity="0.33"/><rect x="25.8" y="34.30" width="7.8" height="1.5" fill="#8f9aa5" opacity="0.33"/><rect x="34.6" y="34.30" width="6.9" height="1.5" fill="#569cd6" opacity="0.33"/><rect x="42.5" y="34.30" width="6.9" height="1.5" fill="#ff40ff" opacity="0.33"/><rect x="50.3" y="34.30" width="3.9" height="1.5" fill="#d4d4d4" opacity="0.33"/><rect x="55.3" y="34.30" width="7.8" height="1.5" fill="#8f9aa5" opacity="0.33"/><rect x="13.0" y="36.26" width="18.6" height="1.5" fill="#d4d4d4" opacity="0.33"/><rect x="32.6" y="36.26" width="8.8" height="1.5" fill="#d4d4d4" opacity="0.33"/><rect x="42.4" y="36.26" width="7.8" height="1.5" fill="#8f9aa5" opacity="0.33"/><rect x="51.3" y="36.26" width="6.9" height="1.5" fill="#569cd6" opacity="0.33"/><rect x="59.1" y="36.26" width="6.9" height="1.5" fill="#ff40ff" opacity="0.33"/><rect x="67.0" y="36.26" width="3.9" height="1.5" fill="#d4d4d4" opacity="0.33"/><rect x="71.9" y="36.26" width="7.8" height="1.5" fill="#8f9aa5" opacity="0.33"/><rect x="13.0" y="38.22" width="14.7" height="1.5" fill="#d4d4d4" opacity="0.33"/><rect x="28.7" y="38.22" width="7.8" height="1.5" fill="#569cd6" opacity="0.33"/><rect x="37.5" y="38.22" width="7.8" height="1.5" fill="#8f9aa5" opacity="0.33"/><rect x="13.0" y="40.18" width="11.8" height="1.5" fill="#d4d4d4" opacity="0.33"/><rect x="25.8" y="40.18" width="7.8" height="1.5" fill="#d4d4d4" opacity="0.33"/><rect x="34.6" y="40.18" width="7.8" height="1.5" fill="#8f9aa5" opacity="0.33"/><rect x="43.4" y="40.18" width="6.9" height="1.5" fill="#569cd6" opacity="0.33"/><rect x="51.3" y="40.18" width="6.9" height="1.5" fill="#ff40ff" opacity="0.33"/><rect x="59.2" y="40.18" width="3.9" height="1.5" fill="#d4d4d4" opacity="0.33"/><rect x="64.1" y="40.18" width="7.8" height="1.5" fill="#8f9aa5" opacity="0.33"/><rect x="13.0" y="42.14" width="11.8" height="1.5" fill="#d4d4d4" opacity="0.33"/><rect x="25.8" y="42.14" width="5.9" height="1.5" fill="#d4d4d4" opacity="0.33"/><rect x="32.6" y="42.14" width="7.8" height="1.5" fill="#8f9aa5" opacity="0.33"/><rect x="41.5" y="42.14" width="6.9" height="1.5" fill="#569cd6" opacity="0.33"/><rect x="49.3" y="42.14" width="6.9" height="1.5" fill="#ff40ff" opacity="0.33"/><rect x="57.2" y="42.14" width="3.9" height="1.5" fill="#d4d4d4" opacity="0.33"/><rect x="62.1" y="42.14" width="7.8" height="1.5" fill="#8f9aa5" opacity="0.33"/><rect x="13.0" y="44.10" width="14.7" height="1.5" fill="#d4d4d4" opacity="0.33"/><rect x="28.7" y="44.10" width="5.9" height="1.5" fill="#d4d4d4" opacity="0.33"/><rect x="35.6" y="44.10" width="7.8" height="1.5" fill="#8f9aa5" opacity="0.33"/><rect x="13.0" y="46.06" width="7.8" height="1.5" fill="#d4d4d4" opacity="0.33"/><rect x="21.8" y="46.06" width="4.9" height="1.5" fill="#d4d4d4" opacity="0.33"/><rect x="27.7" y="46.06" width="7.8" height="1.5" fill="#8f9aa5" opacity="0.33"/><rect x="36.6" y="46.06" width="6.9" height="1.5" fill="#569cd6" opacity="0.33"/><rect x="44.4" y="46.06" width="6.9" height="1.5" fill="#ff40ff" opacity="0.33"/><rect x="52.3" y="46.06" width="3.9" height="1.5" fill="#d4d4d4" opacity="0.33"/><rect x="57.2" y="46.06" width="7.8" height="1.5" fill="#8f9aa5" opacity="0.33"/><rect x="13.0" y="48.02" width="7.8" height="1.5" fill="#d4d4d4" opacity="0.33"/><rect x="21.8" y="48.02" width="5.9" height="1.5" fill="#569cd6" opacity="0.33"/><rect x="28.7" y="48.02" width="7.8" height="1.5" fill="#8f9aa5" opacity="0.33"/><rect x="13.0" y="49.98" width="15.7" height="1.5" fill="#d4d4d4" opacity="0.33"/><rect x="29.7" y="49.98" width="5.9" height="1.5" fill="#569cd6" opacity="0.33"/><rect x="36.6" y="49.98" width="7.8" height="1.5" fill="#8f9aa5" opacity="0.33"/><rect x="13.0" y="51.94" width="18.6" height="1.5" fill="#d4d4d4" opacity="0.33"/><rect x="32.6" y="51.94" width="4.9" height="1.5" fill="#d4d4d4" opacity="0.33"/><rect x="38.5" y="51.94" width="7.8" height="1.5" fill="#8f9aa5" opacity="0.33"/><rect x="47.4" y="51.94" width="6.9" height="1.5" fill="#569cd6" opacity="0.33"/><rect x="55.2" y="51.94" width="6.9" height="1.5" fill="#ff40ff" opacity="0.33"/><rect x="63.1" y="51.94" width="3.9" height="1.5" fill="#d4d4d4" opacity="0.33"/><rect x="68.0" y="51.94" width="7.8" height="1.5" fill="#8f9aa5" opacity="0.33"/><rect x="13.0" y="53.90" width="10.8" height="1.5" fill="#569cd6" opacity="0.33"/><rect x="24.8" y="53.90" width="22.5" height="1.5" fill="#d4d4d4" opacity="0.33"/><rect x="13.0" y="55.86" width="2.0" height="1.5" fill="#ffd700" opacity="0.33"/><rect x="13.0" y="59.78" width="5.9" height="1.5" fill="#569cd6" opacity="0.33"/><rect x="19.9" y="59.78" width="4.9" height="1.5" fill="#569cd6" opacity="0.33"/><rect x="25.8" y="59.78" width="29.4" height="1.5" fill="#d4d4d4" opacity="0.33"/><rect x="56.2" y="59.78" width="1.0" height="1.5" fill="#ffd700" opacity="0.33"/><rect x="13.0" y="61.74" width="14.7" height="1.5" fill="#d4d4d4" opacity="0.33"/><rect x="28.7" y="61.74" width="4.9" height="1.5" fill="#d4d4d4" opacity="0.33"/><rect x="34.6" y="61.74" width="7.8" height="1.5" fill="#8f9aa5" opacity="0.33"/><rect x="43.4" y="61.74" width="6.9" height="1.5" fill="#569cd6" opacity="0.33"/><rect x="51.3" y="61.74" width="6.9" height="1.5" fill="#ff40ff" opacity="0.33"/><rect x="59.2" y="61.74" width="3.9" height="1.5" fill="#d4d4d4" opacity="0.33"/><rect x="64.1" y="61.74" width="7.8" height="1.5" fill="#8f9aa5" opacity="0.33"/><rect x="13.0" y="63.70" width="11.8" height="1.5" fill="#d4d4d4" opacity="0.33"/><rect x="25.8" y="63.70" width="6.9" height="1.5" fill="#d4d4d4" opacity="0.33"/><rect x="33.6" y="63.70" width="7.8" height="1.5" fill="#8f9aa5" opacity="0.33"/><rect x="13.0" y="65.66" width="10.8" height="1.5" fill="#d4d4d4" opacity="0.33"/><rect x="24.8" y="65.66" width="7.8" height="1.5" fill="#569cd6" opacity="0.33"/><rect x="33.6" y="65.66" width="7.8" height="1.5" fill="#8f9aa5" opacity="0.33"/><rect x="13.0" y="67.62" width="5.9" height="1.5" fill="#d4d4d4" opacity="0.33"/><rect x="19.9" y="67.62" width="8.8" height="1.5" fill="#d4d4d4" opacity="0.33"/><rect x="29.7" y="67.62" width="7.8" height="1.5" fill="#8f9aa5" opacity="0.33"/><rect x="38.5" y="67.62" width="6.9" height="1.5" fill="#569cd6" opacity="0.33"/><rect x="46.4" y="67.62" width="6.9" height="1.5" fill="#ff40ff" opacity="0.33"/><rect x="54.3" y="67.62" width="3.9" height="1.5" fill="#d4d4d4" opacity="0.33"/><rect x="59.2" y="67.62" width="7.8" height="1.5" fill="#8f9aa5" opacity="0.33"/><rect x="13.0" y="69.58" width="14.7" height="1.5" fill="#d4d4d4" opacity="0.33"/><rect x="28.7" y="69.58" width="7.8" height="1.5" fill="#569cd6" opacity="0.33"/><rect x="37.5" y="69.58" width="7.8" height="1.5" fill="#8f9aa5" opacity="0.33"/><rect x="13.0" y="71.54" width="16.7" height="1.5" fill="#d4d4d4" opacity="0.33"/><rect x="30.7" y="71.54" width="8.8" height="1.5" fill="#d4d4d4" opacity="0.33"/><rect x="40.5" y="71.54" width="7.8" height="1.5" fill="#8f9aa5" opacity="0.33"/><rect x="13.0" y="73.50" width="13.7" height="1.5" fill="#d4d4d4" opacity="0.33"/><rect x="27.7" y="73.50" width="6.9" height="1.5" fill="#569cd6" opacity="0.33"/><rect x="35.6" y="73.50" width="7.8" height="1.5" fill="#8f9aa5" opacity="0.33"/><rect x="13.0" y="75.46" width="16.7" height="1.5" fill="#d4d4d4" opacity="0.33"/><rect x="30.7" y="75.46" width="7.8" height="1.5" fill="#d4d4d4" opacity="0.33"/><rect x="39.5" y="75.46" width="7.8" height="1.5" fill="#8f9aa5" opacity="0.33"/><rect x="13.0" y="77.42" width="18.6" height="1.5" fill="#d4d4d4" opacity="0.33"/><rect x="32.6" y="77.42" width="6.9" height="1.5" fill="#569cd6" opacity="0.33"/><rect x="40.5" y="77.42" width="7.8" height="1.5" fill="#8f9aa5" opacity="0.33"/><rect x="13.0" y="79.38" width="6.9" height="1.5" fill="#d4d4d4" opacity="0.33"/><rect x="20.9" y="79.38" width="2.9" height="1.5" fill="#569cd6" opacity="0.33"/><rect x="24.8" y="79.38" width="7.8" height="1.5" fill="#8f9aa5" opacity="0.33"/><rect x="13.0" y="81.34" width="15.7" height="1.5" fill="#d4d4d4" opacity="0.33"/><rect x="29.7" y="81.34" width="5.9" height="1.5" fill="#569cd6" opacity="0.33"/><rect x="36.6" y="81.34" width="7.8" height="1.5" fill="#8f9aa5" opacity="0.33"/><rect x="13.0" y="83.30" width="17.6" height="1.5" fill="#d4d4d4" opacity="0.33"/><rect x="31.6" y="83.30" width="2.9" height="1.5" fill="#569cd6" opacity="0.33"/><rect x="35.6" y="83.30" width="7.8" height="1.5" fill="#8f9aa5" opacity="0.33"/><rect x="13.0" y="85.26" width="7.8" height="1.5" fill="#d4d4d4" opacity="0.33"/><rect x="21.8" y="85.26" width="2.9" height="1.5" fill="#569cd6" opacity="0.33"/><rect x="25.8" y="85.26" width="7.8" height="1.5" fill="#8f9aa5" opacity="0.33"/><rect x="13.0" y="87.22" width="17.6" height="1.5" fill="#d4d4d4" opacity="0.33"/><rect x="31.6" y="87.22" width="5.9" height="1.5" fill="#569cd6" opacity="0.33"/><rect x="38.5" y="87.22" width="7.8" height="1.5" fill="#8f9aa5" opacity="0.33"/><rect x="13.0" y="89.18" width="5.9" height="1.5" fill="#d4d4d4" opacity="0.33"/><rect x="19.9" y="89.18" width="6.9" height="1.5" fill="#d4d4d4" opacity="0.33"/><rect x="27.7" y="89.18" width="7.8" height="1.5" fill="#8f9aa5" opacity="0.33"/><rect x="36.6" y="89.18" width="6.9" height="1.5" fill="#569cd6" opacity="0.33"/><rect x="44.4" y="89.18" width="6.9" height="1.5" fill="#ff40ff" opacity="0.33"/><rect x="52.3" y="89.18" width="3.9" height="1.5" fill="#d4d4d4" opacity="0.33"/><rect x="57.2" y="89.18" width="7.8" height="1.5" fill="#8f9aa5" opacity="0.33"/><rect x="13.0" y="91.14" width="5.9" height="1.5" fill="#d4d4d4" opacity="0.33"/><rect x="19.9" y="91.14" width="5.9" height="1.5" fill="#d4d4d4" opacity="0.33"/><rect x="26.8" y="91.14" width="7.8" height="1.5" fill="#8f9aa5" opacity="0.33"/><rect x="13.0" y="93.10" width="10.8" height="1.5" fill="#d4d4d4" opacity="0.33"/><rect x="24.8" y="93.10" width="6.9" height="1.5" fill="#d4d4d4" opacity="0.33"/><rect x="32.6" y="93.10" width="7.8" height="1.5" fill="#8f9aa5" opacity="0.33"/><rect x="13.0" y="95.06" width="10.8" height="1.5" fill="#569cd6" opacity="0.33"/><rect x="24.8" y="95.06" width="37.2" height="1.5" fill="#d4d4d4" opacity="0.33"/><rect x="13.0" y="97.02" width="2.0" height="1.5" fill="#ffd700" opacity="0.33"/><rect x="13.0" y="100.94" width="5.9" height="1.5" fill="#569cd6" opacity="0.33"/><rect x="19.9" y="100.94" width="4.9" height="1.5" fill="#569cd6" opacity="0.33"/><rect x="25.8" y="100.94" width="21.6" height="1.5" fill="#d4d4d4" opacity="0.33"/><rect x="48.3" y="100.94" width="1.0" height="1.5" fill="#ffd700" opacity="0.33"/><rect x="13.0" y="102.90" width="5.9" height="1.5" fill="#d4d4d4" opacity="0.33"/><rect x="19.9" y="102.90" width="4.9" height="1.5" fill="#d4d4d4" opacity="0.33"/><rect x="25.8" y="102.90" width="7.8" height="1.5" fill="#8f9aa5" opacity="0.33"/><rect x="13.0" y="104.86" width="6.9" height="1.5" fill="#d4d4d4" opacity="0.33"/><rect x="20.9" y="104.86" width="6.9" height="1.5" fill="#569cd6" opacity="0.33"/><rect x="28.7" y="104.86" width="7.8" height="1.5" fill="#8f9aa5" opacity="0.33"/><rect x="13.0" y="106.82" width="8.8" height="1.5" fill="#d4d4d4" opacity="0.33"/><rect x="22.8" y="106.82" width="5.9" height="1.5" fill="#d4d4d4" opacity="0.33"/><rect x="29.7" y="106.82" width="7.8" height="1.5" fill="#8f9aa5" opacity="0.33"/><rect x="13.0" y="108.78" width="9.8" height="1.5" fill="#d4d4d4" opacity="0.33"/><rect x="23.8" y="108.78" width="3.9" height="1.5" fill="#569cd6" opacity="0.33"/><rect x="28.7" y="108.78" width="7.8" height="1.5" fill="#8f9aa5" opacity="0.33"/><rect x="13.0" y="110.74" width="18.6" height="1.5" fill="#d4d4d4" opacity="0.33"/><rect x="32.6" y="110.74" width="4.9" height="1.5" fill="#d4d4d4" opacity="0.33"/><rect x="38.5" y="110.74" width="7.8" height="1.5" fill="#8f9aa5" opacity="0.33"/><rect x="13.0" y="112.70" width="10.8" height="1.5" fill="#569cd6" opacity="0.33"/><rect x="24.8" y="112.70" width="19.6" height="1.5" fill="#d4d4d4" opacity="0.33"/><rect x="13.0" y="114.66" width="2.0" height="1.5" fill="#ffd700" opacity="0.33"/><rect x="13.0" y="118.58" width="5.9" height="1.5" fill="#569cd6" opacity="0.33"/><rect x="19.9" y="118.58" width="4.9" height="1.5" fill="#569cd6" opacity="0.33"/><rect x="25.8" y="118.58" width="24.5" height="1.5" fill="#d4d4d4" opacity="0.33"/><rect x="51.3" y="118.58" width="1.0" height="1.5" fill="#ffd700" opacity="0.33"/><rect x="13.0" y="120.54" width="19.6" height="1.5" fill="#d4d4d4" opacity="0.33"/><rect x="33.6" y="120.54" width="8.8" height="1.5" fill="#d4d4d4" opacity="0.33"/><rect x="43.4" y="120.54" width="7.8" height="1.5" fill="#8f9aa5" opacity="0.33"/><rect x="52.3" y="120.54" width="6.9" height="1.5" fill="#569cd6" opacity="0.33"/><rect x="60.1" y="120.54" width="6.9" height="1.5" fill="#ff40ff" opacity="0.33"/><rect x="68.0" y="120.54" width="3.9" height="1.5" fill="#d4d4d4" opacity="0.33"/><rect x="72.9" y="120.54" width="7.8" height="1.5" fill="#8f9aa5" opacity="0.33"/><rect x="13.0" y="122.50" width="12.7" height="1.5" fill="#d4d4d4" opacity="0.33"/><rect x="26.7" y="122.50" width="8.8" height="1.5" fill="#569cd6" opacity="0.33"/><rect x="36.6" y="122.50" width="7.8" height="1.5" fill="#8f9aa5" opacity="0.33"/><rect x="13.0" y="124.46" width="15.7" height="1.5" fill="#d4d4d4" opacity="0.33"/><rect x="29.7" y="124.46" width="8.8" height="1.5" fill="#d4d4d4" opacity="0.33"/><rect x="39.5" y="124.46" width="7.8" height="1.5" fill="#8f9aa5" opacity="0.33"/><rect x="13.0" y="126.42" width="13.7" height="1.5" fill="#d4d4d4" opacity="0.33"/><rect x="27.7" y="126.42" width="2.9" height="1.5" fill="#d4d4d4" opacity="0.33"/><rect x="31.7" y="126.42" width="7.8" height="1.5" fill="#8f9aa5" opacity="0.33"/><rect x="13.0" y="128.38" width="17.6" height="1.5" fill="#d4d4d4" opacity="0.33"/><rect x="31.6" y="128.38" width="6.9" height="1.5" fill="#d4d4d4" opacity="0.33"/><rect x="39.5" y="128.38" width="7.8" height="1.5" fill="#8f9aa5" opacity="0.33"/><rect x="13.0" y="130.34" width="15.7" height="1.5" fill="#d4d4d4" opacity="0.33"/><rect x="29.7" y="130.34" width="7.8" height="1.5" fill="#569cd6" opacity="0.33"/><rect x="38.5" y="130.34" width="7.8" height="1.5" fill="#8f9aa5" opacity="0.33"/><rect x="13.0" y="132.30" width="19.6" height="1.5" fill="#d4d4d4" opacity="0.33"/><rect x="33.6" y="132.30" width="4.9" height="1.5" fill="#d4d4d4" opacity="0.33"/><rect x="39.5" y="132.30" width="7.8" height="1.5" fill="#8f9aa5" opacity="0.33"/><rect x="13.0" y="134.26" width="9.8" height="1.5" fill="#d4d4d4" opacity="0.33"/><rect x="23.8" y="134.26" width="6.9" height="1.5" fill="#569cd6" opacity="0.33"/><rect x="31.7" y="134.26" width="7.8" height="1.5" fill="#8f9aa5" opacity="0.33"/><rect x="13.0" y="136.22" width="10.8" height="1.5" fill="#d4d4d4" opacity="0.33"/><rect x="24.8" y="136.22" width="2.9" height="1.5" fill="#569cd6" opacity="0.33"/><rect x="28.7" y="136.22" width="7.8" height="1.5" fill="#8f9aa5" opacity="0.33"/><rect x="13.0" y="138.18" width="14.7" height="1.5" fill="#d4d4d4" opacity="0.33"/><rect x="28.7" y="138.18" width="4.9" height="1.5" fill="#d4d4d4" opacity="0.33"/><rect x="34.6" y="138.18" width="7.8" height="1.5" fill="#8f9aa5" opacity="0.33"/><rect x="43.4" y="138.18" width="6.9" height="1.5" fill="#569cd6" opacity="0.33"/><rect x="51.3" y="138.18" width="6.9" height="1.5" fill="#ff40ff" opacity="0.33"/><rect x="59.2" y="138.18" width="3.9" height="1.5" fill="#d4d4d4" opacity="0.33"/><rect x="64.1" y="138.18" width="7.8" height="1.5" fill="#8f9aa5" opacity="0.33"/><rect x="13.0" y="140.14" width="10.8" height="1.5" fill="#569cd6" opacity="0.33"/><rect x="24.8" y="140.14" width="9.8" height="1.5" fill="#d4d4d4" opacity="0.33"/><rect x="13.0" y="142.10" width="2.0" height="1.5" fill="#ffd700" opacity="0.33"/><rect x="13.0" y="146.02" width="5.9" height="1.5" fill="#569cd6" opacity="0.33"/><rect x="19.9" y="146.02" width="4.9" height="1.5" fill="#569cd6" opacity="0.33"/><rect x="25.8" y="146.02" width="25.5" height="1.5" fill="#d4d4d4" opacity="0.33"/><rect x="52.3" y="146.02" width="1.0" height="1.5" fill="#ffd700" opacity="0.33"/><rect x="13.0" y="147.98" width="15.7" height="1.5" fill="#d4d4d4" opacity="0.33"/><rect x="29.7" y="147.98" width="3.9" height="1.5" fill="#d4d4d4" opacity="0.33"/><rect x="34.6" y="147.98" width="7.8" height="1.5" fill="#8f9aa5" opacity="0.33"/><rect x="13.0" y="149.94" width="15.7" height="1.5" fill="#d4d4d4" opacity="0.33"/><rect x="29.7" y="149.94" width="4.9" height="1.5" fill="#569cd6" opacity="0.33"/><rect x="35.6" y="149.94" width="7.8" height="1.5" fill="#8f9aa5" opacity="0.33"/><rect x="13.0" y="151.90" width="15.7" height="1.5" fill="#d4d4d4" opacity="0.33"/><rect x="29.7" y="151.90" width="4.9" height="1.5" fill="#569cd6" opacity="0.33"/><rect x="35.6" y="151.90" width="7.8" height="1.5" fill="#8f9aa5" opacity="0.33"/><rect x="13.0" y="153.86" width="9.8" height="1.5" fill="#d4d4d4" opacity="0.33"/><rect x="23.8" y="153.86" width="7.8" height="1.5" fill="#d4d4d4" opacity="0.33"/><rect x="32.6" y="153.86" width="7.8" height="1.5" fill="#8f9aa5" opacity="0.33"/><rect x="13.0" y="155.82" width="14.7" height="1.5" fill="#d4d4d4" opacity="0.33"/><rect x="28.7" y="155.82" width="2.9" height="1.5" fill="#569cd6" opacity="0.33"/><rect x="32.6" y="155.82" width="7.8" height="1.5" fill="#8f9aa5" opacity="0.33"/><rect x="13.0" y="157.78" width="10.8" height="1.5" fill="#569cd6" opacity="0.33"/><rect x="24.8" y="157.78" width="39.2" height="1.5" fill="#d4d4d4" opacity="0.33"/><rect x="13.0" y="159.74" width="2.0" height="1.5" fill="#ffd700" opacity="0.33"/><rect x="13.0" y="163.66" width="5.9" height="1.5" fill="#569cd6" opacity="0.33"/><rect x="19.9" y="163.66" width="4.9" height="1.5" fill="#569cd6" opacity="0.33"/><rect x="25.8" y="163.66" width="13.7" height="1.5" fill="#d4d4d4" opacity="0.33"/><rect x="40.5" y="163.66" width="1.0" height="1.5" fill="#ffd700" opacity="0.33"/><rect x="13.0" y="165.62" width="9.8" height="1.5" fill="#d4d4d4" opacity="0.33"/><rect x="23.8" y="165.62" width="7.8" height="1.5" fill="#d4d4d4" opacity="0.33"/><rect x="32.6" y="165.62" width="7.8" height="1.5" fill="#8f9aa5" opacity="0.33"/><rect x="41.5" y="165.62" width="6.9" height="1.5" fill="#569cd6" opacity="0.33"/><rect x="49.3" y="165.62" width="6.9" height="1.5" fill="#ff40ff" opacity="0.33"/><rect x="57.2" y="165.62" width="3.9" height="1.5" fill="#d4d4d4" opacity="0.33"/><rect x="62.1" y="165.62" width="7.8" height="1.5" fill="#8f9aa5" opacity="0.33"/><rect x="13.0" y="167.58" width="14.7" height="1.5" fill="#d4d4d4" opacity="0.33"/><rect x="28.7" y="167.58" width="6.9" height="1.5" fill="#569cd6" opacity="0.33"/><rect x="36.6" y="167.58" width="7.8" height="1.5" fill="#8f9aa5" opacity="0.33"/><rect x="13.0" y="169.54" width="10.8" height="1.5" fill="#d4d4d4" opacity="0.33"/><rect x="24.8" y="169.54" width="3.9" height="1.5" fill="#569cd6" opacity="0.33"/><rect x="29.7" y="169.54" width="7.8" height="1.5" fill="#8f9aa5" opacity="0.33"/><rect x="13.0" y="171.50" width="10.8" height="1.5" fill="#d4d4d4" opacity="0.33"/><rect x="24.8" y="171.50" width="8.8" height="1.5" fill="#569cd6" opacity="0.33"/><rect x="34.6" y="171.50" width="7.8" height="1.5" fill="#8f9aa5" opacity="0.33"/><rect x="13.0" y="173.46" width="10.8" height="1.5" fill="#569cd6" opacity="0.33"/><rect x="24.8" y="173.46" width="28.4" height="1.5" fill="#d4d4d4" opacity="0.33"/><rect x="13.0" y="175.42" width="2.0" height="1.5" fill="#ffd700" opacity="0.33"/><rect x="13.0" y="179.34" width="5.9" height="1.5" fill="#569cd6" opacity="0.33"/><rect x="19.9" y="179.34" width="4.9" height="1.5" fill="#569cd6" opacity="0.33"/><rect x="25.8" y="179.34" width="21.6" height="1.5" fill="#d4d4d4" opacity="0.33"/><rect x="48.3" y="179.34" width="1.0" height="1.5" fill="#ffd700" opacity="0.33"/><rect x="13.0" y="181.30" width="11.8" height="1.5" fill="#d4d4d4" opacity="0.33"/><rect x="25.8" y="181.30" width="2.9" height="1.5" fill="#569cd6" opacity="0.33"/><rect x="29.7" y="181.30" width="7.8" height="1.5" fill="#8f9aa5" opacity="0.33"/><rect x="13.0" y="183.26" width="5.9" height="1.5" fill="#d4d4d4" opacity="0.33"/><rect x="19.9" y="183.26" width="6.9" height="1.5" fill="#d4d4d4" opacity="0.33"/><rect x="27.7" y="183.26" width="7.8" height="1.5" fill="#8f9aa5" opacity="0.33"/><rect x="36.6" y="183.26" width="6.9" height="1.5" fill="#569cd6" opacity="0.33"/><rect x="44.4" y="183.26" width="6.9" height="1.5" fill="#ff40ff" opacity="0.33"/><rect x="52.3" y="183.26" width="3.9" height="1.5" fill="#d4d4d4" opacity="0.33"/><rect x="57.2" y="183.26" width="7.8" height="1.5" fill="#8f9aa5" opacity="0.33"/><rect x="13.0" y="185.22" width="7.8" height="1.5" fill="#d4d4d4" opacity="0.33"/><rect x="21.8" y="185.22" width="4.9" height="1.5" fill="#d4d4d4" opacity="0.33"/><rect x="27.7" y="185.22" width="7.8" height="1.5" fill="#8f9aa5" opacity="0.33"/><rect x="13.0" y="187.18" width="15.7" height="1.5" fill="#d4d4d4" opacity="0.33"/><rect x="29.7" y="187.18" width="8.8" height="1.5" fill="#d4d4d4" opacity="0.33"/><rect x="39.5" y="187.18" width="7.8" height="1.5" fill="#8f9aa5" opacity="0.33"/><rect x="13.0" y="189.14" width="10.8" height="1.5" fill="#d4d4d4" opacity="0.33"/><rect x="24.8" y="189.14" width="3.9" height="1.5" fill="#569cd6" opacity="0.33"/><rect x="29.7" y="189.14" width="7.8" height="1.5" fill="#8f9aa5" opacity="0.33"/><rect x="13.0" y="191.10" width="10.8" height="1.5" fill="#569cd6" opacity="0.33"/><rect x="24.8" y="191.10" width="30.4" height="1.5" fill="#d4d4d4" opacity="0.33"/><rect x="13.0" y="193.06" width="2.0" height="1.5" fill="#ffd700" opacity="0.33"/><rect x="13.0" y="196.98" width="5.9" height="1.5" fill="#569cd6" opacity="0.33"/><rect x="19.9" y="196.98" width="4.9" height="1.5" fill="#569cd6" opacity="0.33"/><rect x="25.8" y="196.98" width="26.5" height="1.5" fill="#d4d4d4" opacity="0.33"/><rect x="53.2" y="196.98" width="1.0" height="1.5" fill="#ffd700" opacity="0.33"/><rect x="13.0" y="198.94" width="6.9" height="1.5" fill="#d4d4d4" opacity="0.33"/><rect x="20.9" y="198.94" width="2.9" height="1.5" fill="#d4d4d4" opacity="0.33"/><rect x="24.8" y="198.94" width="7.8" height="1.5" fill="#8f9aa5" opacity="0.33"/><rect x="13.0" y="200.90" width="10.8" height="1.5" fill="#d4d4d4" opacity="0.33"/><rect x="24.8" y="200.90" width="7.8" height="1.5" fill="#d4d4d4" opacity="0.33"/><rect x="33.6" y="200.90" width="7.8" height="1.5" fill="#8f9aa5" opacity="0.33"/><rect x="13.0" y="202.86" width="12.7" height="1.5" fill="#d4d4d4" opacity="0.33"/><rect x="26.7" y="202.86" width="8.8" height="1.5" fill="#d4d4d4" opacity="0.33"/><rect x="36.6" y="202.86" width="7.8" height="1.5" fill="#8f9aa5" opacity="0.33"/><rect x="45.4" y="202.86" width="6.9" height="1.5" fill="#569cd6" opacity="0.33"/><rect x="53.3" y="202.86" width="6.9" height="1.5" fill="#ff40ff" opacity="0.33"/><rect x="61.1" y="202.86" width="3.9" height="1.5" fill="#d4d4d4" opacity="0.33"/><rect x="66.0" y="202.86" width="7.8" height="1.5" fill="#8f9aa5" opacity="0.33"/><rect x="13.0" y="204.82" width="7.8" height="1.5" fill="#d4d4d4" opacity="0.33"/><rect x="21.8" y="204.82" width="2.9" height="1.5" fill="#d4d4d4" opacity="0.33"/><rect x="25.8" y="204.82" width="7.8" height="1.5" fill="#8f9aa5" opacity="0.33"/><rect x="34.6" y="204.82" width="6.9" height="1.5" fill="#569cd6" opacity="0.33"/><rect x="42.5" y="204.82" width="6.9" height="1.5" fill="#ff40ff" opacity="0.33"/><rect x="50.3" y="204.82" width="3.9" height="1.5" fill="#d4d4d4" opacity="0.33"/><rect x="55.3" y="204.82" width="7.8" height="1.5" fill="#8f9aa5" opacity="0.33"/><rect x="13.0" y="206.78" width="15.7" height="1.5" fill="#d4d4d4" opacity="0.33"/><rect x="29.7" y="206.78" width="3.9" height="1.5" fill="#569cd6" opacity="0.33"/><rect x="34.6" y="206.78" width="7.8" height="1.5" fill="#8f9aa5" opacity="0.33"/><rect x="13.0" y="208.74" width="12.7" height="1.5" fill="#d4d4d4" opacity="0.33"/><rect x="26.7" y="208.74" width="4.9" height="1.5" fill="#d4d4d4" opacity="0.33"/><rect x="32.6" y="208.74" width="7.8" height="1.5" fill="#8f9aa5" opacity="0.33"/><rect x="41.5" y="208.74" width="6.9" height="1.5" fill="#569cd6" opacity="0.33"/><rect x="49.3" y="208.74" width="6.9" height="1.5" fill="#ff40ff" opacity="0.33"/><rect x="57.2" y="208.74" width="3.9" height="1.5" fill="#d4d4d4" opacity="0.33"/><rect x="62.1" y="208.74" width="7.8" height="1.5" fill="#8f9aa5" opacity="0.33"/><rect x="13.0" y="210.70" width="6.9" height="1.5" fill="#d4d4d4" opacity="0.33"/><rect x="20.9" y="210.70" width="2.9" height="1.5" fill="#569cd6" opacity="0.33"/><rect x="24.8" y="210.70" width="7.8" height="1.5" fill="#8f9aa5" opacity="0.33"/><rect x="13.0" y="212.66" width="8.8" height="1.5" fill="#d4d4d4" opacity="0.33"/><rect x="22.8" y="212.66" width="4.9" height="1.5" fill="#d4d4d4" opacity="0.33"/><rect x="28.7" y="212.66" width="7.8" height="1.5" fill="#8f9aa5" opacity="0.33"/><rect x="13.0" y="214.62" width="18.6" height="1.5" fill="#d4d4d4" opacity="0.33"/><rect x="32.6" y="214.62" width="6.9" height="1.5" fill="#d4d4d4" opacity="0.33"/><rect x="40.5" y="214.62" width="7.8" height="1.5" fill="#8f9aa5" opacity="0.33"/><rect x="49.3" y="214.62" width="6.9" height="1.5" fill="#569cd6" opacity="0.33"/><rect x="57.2" y="214.62" width="6.9" height="1.5" fill="#ff40ff" opacity="0.33"/><rect x="65.0" y="214.62" width="3.9" height="1.5" fill="#d4d4d4" opacity="0.33"/><rect x="70.0" y="214.62" width="7.8" height="1.5" fill="#8f9aa5" opacity="0.33"/><rect x="13.0" y="216.58" width="10.8" height="1.5" fill="#569cd6" opacity="0.33"/><rect x="24.8" y="216.58" width="14.7" height="1.5" fill="#d4d4d4" opacity="0.33"/><rect x="13.0" y="218.54" width="2.0" height="1.5" fill="#ffd700" opacity="0.33"/><rect x="13.0" y="222.46" width="5.9" height="1.5" fill="#569cd6" opacity="0.33"/><rect x="19.9" y="222.46" width="4.9" height="1.5" fill="#569cd6" opacity="0.33"/><rect x="25.8" y="222.46" width="21.6" height="1.5" fill="#d4d4d4" opacity="0.33"/><rect x="48.3" y="222.46" width="1.0" height="1.5" fill="#ffd700" opacity="0.33"/><rect x="13.0" y="224.42" width="18.6" height="1.5" fill="#d4d4d4" opacity="0.33"/><rect x="32.6" y="224.42" width="7.8" height="1.5" fill="#569cd6" opacity="0.33"/><rect x="41.5" y="224.42" width="7.8" height="1.5" fill="#8f9aa5" opacity="0.33"/><rect x="13.0" y="226.38" width="14.7" height="1.5" fill="#d4d4d4" opacity="0.33"/><rect x="28.7" y="226.38" width="4.9" height="1.5" fill="#569cd6" opacity="0.33"/><rect x="34.6" y="226.38" width="7.8" height="1.5" fill="#8f9aa5" opacity="0.33"/><rect x="13.0" y="228.34" width="11.8" height="1.5" fill="#d4d4d4" opacity="0.33"/><rect x="25.8" y="228.34" width="4.9" height="1.5" fill="#d4d4d4" opacity="0.33"/><rect x="31.7" y="228.34" width="7.8" height="1.5" fill="#8f9aa5" opacity="0.33"/><rect x="13.0" y="230.30" width="18.6" height="1.5" fill="#d4d4d4" opacity="0.33"/><rect x="32.6" y="230.30" width="4.9" height="1.5" fill="#d4d4d4" opacity="0.33"/><rect x="38.5" y="230.30" width="7.8" height="1.5" fill="#8f9aa5" opacity="0.33"/><rect x="13.0" y="232.26" width="15.7" height="1.5" fill="#d4d4d4" opacity="0.33"/><rect x="29.7" y="232.26" width="5.9" height="1.5" fill="#569cd6" opacity="0.33"/><rect x="36.6" y="232.26" width="7.8" height="1.5" fill="#8f9aa5" opacity="0.33"/><rect x="13.0" y="234.22" width="14.7" height="1.5" fill="#d4d4d4" opacity="0.33"/><rect x="28.7" y="234.22" width="5.9" height="1.5" fill="#569cd6" opacity="0.33"/><rect x="35.6" y="234.22" width="7.8" height="1.5" fill="#8f9aa5" opacity="0.33"/><rect x="13.0" y="236.18" width="11.8" height="1.5" fill="#d4d4d4" opacity="0.33"/><rect x="25.8" y="236.18" width="3.9" height="1.5" fill="#569cd6" opacity="0.33"/><rect x="30.7" y="236.18" width="7.8" height="1.5" fill="#8f9aa5" opacity="0.33"/><rect x="13.0" y="238.14" width="12.7" height="1.5" fill="#d4d4d4" opacity="0.33"/><rect x="26.7" y="238.14" width="8.8" height="1.5" fill="#569cd6" opacity="0.33"/><rect x="36.6" y="238.14" width="7.8" height="1.5" fill="#8f9aa5" opacity="0.33"/><rect x="13.0" y="240.10" width="13.7" height="1.5" fill="#d4d4d4" opacity="0.33"/><rect x="27.7" y="240.10" width="5.9" height="1.5" fill="#d4d4d4" opacity="0.33"/><rect x="34.6" y="240.10" width="7.8" height="1.5" fill="#8f9aa5" opacity="0.33"/><rect x="43.4" y="240.10" width="6.9" height="1.5" fill="#569cd6" opacity="0.33"/><rect x="51.3" y="240.10" width="6.9" height="1.5" fill="#ff40ff" opacity="0.33"/><rect x="59.2" y="240.10" width="3.9" height="1.5" fill="#d4d4d4" opacity="0.33"/><rect x="64.1" y="240.10" width="7.8" height="1.5" fill="#8f9aa5" opacity="0.33"/><rect x="13.0" y="242.06" width="10.8" height="1.5" fill="#569cd6" opacity="0.33"/><rect x="24.8" y="242.06" width="26.5" height="1.5" fill="#d4d4d4" opacity="0.33"/><rect x="13.0" y="244.02" width="2.0" height="1.5" fill="#ffd700" opacity="0.33"/><rect x="13.0" y="247.94" width="5.9" height="1.5" fill="#569cd6" opacity="0.33"/><rect x="19.9" y="247.94" width="4.9" height="1.5" fill="#569cd6" opacity="0.33"/><rect x="25.8" y="247.94" width="20.6" height="1.5" fill="#d4d4d4" opacity="0.33"/><rect x="47.4" y="247.94" width="1.0" height="1.5" fill="#ffd700" opacity="0.33"/><rect x="13.0" y="249.90" width="12.7" height="1.5" fill="#d4d4d4" opacity="0.33"/><rect x="26.7" y="249.90" width="8.8" height="1.5" fill="#569cd6" opacity="0.33"/><rect x="36.6" y="249.90" width="7.8" height="1.5" fill="#8f9aa5" opacity="0.33"/><rect x="13.0" y="251.86" width="16.7" height="1.5" fill="#d4d4d4" opacity="0.33"/><rect x="30.7" y="251.86" width="6.9" height="1.5" fill="#d4d4d4" opacity="0.33"/><rect x="38.5" y="251.86" width="7.8" height="1.5" fill="#8f9aa5" opacity="0.33"/><rect x="47.4" y="251.86" width="6.9" height="1.5" fill="#569cd6" opacity="0.33"/><rect x="55.2" y="251.86" width="6.9" height="1.5" fill="#ff40ff" opacity="0.33"/><rect x="63.1" y="251.86" width="3.9" height="1.5" fill="#d4d4d4" opacity="0.33"/><rect x="68.0" y="251.86" width="7.8" height="1.5" fill="#8f9aa5" opacity="0.33"/><rect x="13.0" y="253.82" width="13.7" height="1.5" fill="#d4d4d4" opacity="0.33"/><rect x="27.7" y="253.82" width="4.9" height="1.5" fill="#d4d4d4" opacity="0.33"/><rect x="33.6" y="253.82" width="7.8" height="1.5" fill="#8f9aa5" opacity="0.33"/><rect x="42.5" y="253.82" width="6.9" height="1.5" fill="#569cd6" opacity="0.33"/><rect x="50.3" y="253.82" width="6.9" height="1.5" fill="#ff40ff" opacity="0.33"/><rect x="58.2" y="253.82" width="3.9" height="1.5" fill="#d4d4d4" opacity="0.33"/><rect x="63.1" y="253.82" width="7.8" height="1.5" fill="#8f9aa5" opacity="0.33"/><rect x="13.0" y="255.78" width="18.6" height="1.5" fill="#d4d4d4" opacity="0.33"/><rect x="32.6" y="255.78" width="2.9" height="1.5" fill="#d4d4d4" opacity="0.33"/><rect x="36.6" y="255.78" width="7.8" height="1.5" fill="#8f9aa5" opacity="0.33"/><rect x="45.4" y="255.78" width="6.9" height="1.5" fill="#569cd6" opacity="0.33"/><rect x="53.3" y="255.78" width="6.9" height="1.5" fill="#ff40ff" opacity="0.33"/><rect x="61.1" y="255.78" width="3.9" height="1.5" fill="#d4d4d4" opacity="0.33"/><rect x="66.0" y="255.78" width="7.8" height="1.5" fill="#8f9aa5" opacity="0.33"/><rect x="13.0" y="257.74" width="9.8" height="1.5" fill="#d4d4d4" opacity="0.33"/><rect x="23.8" y="257.74" width="2.9" height="1.5" fill="#d4d4d4" opacity="0.33"/><rect x="27.7" y="257.74" width="7.8" height="1.5" fill="#8f9aa5" opacity="0.33"/><rect x="36.6" y="257.74" width="6.9" height="1.5" fill="#569cd6" opacity="0.33"/><rect x="44.4" y="257.74" width="6.9" height="1.5" fill="#ff40ff" opacity="0.33"/><rect x="52.3" y="257.74" width="3.9" height="1.5" fill="#d4d4d4" opacity="0.33"/><rect x="57.2" y="257.74" width="7.8" height="1.5" fill="#8f9aa5" opacity="0.33"/><rect x="13.0" y="259.70" width="5.9" height="1.5" fill="#d4d4d4" opacity="0.33"/><rect x="19.9" y="259.70" width="2.9" height="1.5" fill="#d4d4d4" opacity="0.33"/><rect x="23.8" y="259.70" width="7.8" height="1.5" fill="#8f9aa5" opacity="0.33"/><rect x="32.7" y="259.70" width="6.9" height="1.5" fill="#569cd6" opacity="0.33"/><rect x="40.5" y="259.70" width="6.9" height="1.5" fill="#ff40ff" opacity="0.33"/><rect x="48.4" y="259.70" width="3.9" height="1.5" fill="#d4d4d4" opacity="0.33"/><rect x="53.3" y="259.70" width="7.8" height="1.5" fill="#8f9aa5" opacity="0.33"/><rect x="13.0" y="261.66" width="16.7" height="1.5" fill="#d4d4d4" opacity="0.33"/><rect x="30.7" y="261.66" width="6.9" height="1.5" fill="#d4d4d4" opacity="0.33"/><rect x="38.5" y="261.66" width="7.8" height="1.5" fill="#8f9aa5" opacity="0.33"/><rect x="47.4" y="261.66" width="6.9" height="1.5" fill="#569cd6" opacity="0.33"/><rect x="55.2" y="261.66" width="6.9" height="1.5" fill="#ff40ff" opacity="0.33"/><rect x="63.1" y="261.66" width="3.9" height="1.5" fill="#d4d4d4" opacity="0.33"/><rect x="68.0" y="261.66" width="7.8" height="1.5" fill="#8f9aa5" opacity="0.33"/><rect x="13.0" y="263.62" width="19.6" height="1.5" fill="#d4d4d4" opacity="0.33"/><rect x="33.6" y="263.62" width="5.9" height="1.5" fill="#d4d4d4" opacity="0.33"/><rect x="40.5" y="263.62" width="7.8" height="1.5" fill="#8f9aa5" opacity="0.33"/><rect x="49.3" y="263.62" width="6.9" height="1.5" fill="#569cd6" opacity="0.33"/><rect x="57.2" y="263.62" width="6.9" height="1.5" fill="#ff40ff" opacity="0.33"/><rect x="65.0" y="263.62" width="3.9" height="1.5" fill="#d4d4d4" opacity="0.33"/><rect x="70.0" y="263.62" width="7.8" height="1.5" fill="#8f9aa5" opacity="0.33"/><rect x="13.0" y="265.58" width="5.9" height="1.5" fill="#d4d4d4" opacity="0.33"/><rect x="19.9" y="265.58" width="5.9" height="1.5" fill="#d4d4d4" opacity="0.33"/><rect x="26.8" y="265.58" width="7.8" height="1.5" fill="#8f9aa5" opacity="0.33"/><rect x="13.0" y="267.54" width="7.8" height="1.5" fill="#d4d4d4" opacity="0.33"/><rect x="21.8" y="267.54" width="6.9" height="1.5" fill="#d4d4d4" opacity="0.33"/><rect x="29.7" y="267.54" width="7.8" height="1.5" fill="#8f9aa5" opacity="0.33"/><rect x="13.0" y="269.50" width="15.7" height="1.5" fill="#d4d4d4" opacity="0.33"/><rect x="29.7" y="269.50" width="2.9" height="1.5" fill="#569cd6" opacity="0.33"/><rect x="33.6" y="269.50" width="7.8" height="1.5" fill="#8f9aa5" opacity="0.33"/><rect x="13.0" y="271.46" width="11.8" height="1.5" fill="#d4d4d4" opacity="0.33"/><rect x="25.8" y="271.46" width="2.9" height="1.5" fill="#d4d4d4" opacity="0.33"/><rect x="29.7" y="271.46" width="7.8" height="1.5" fill="#8f9aa5" opacity="0.33"/><rect x="13.0" y="273.42" width="14.7" height="1.5" fill="#d4d4d4" opacity="0.33"/><rect x="28.7" y="273.42" width="2.9" height="1.5" fill="#d4d4d4" opacity="0.33"/><rect x="32.6" y="273.42" width="7.8" height="1.5" fill="#8f9aa5" opacity="0.33"/><rect x="41.5" y="273.42" width="6.9" height="1.5" fill="#569cd6" opacity="0.33"/><rect x="49.3" y="273.42" width="6.9" height="1.5" fill="#ff40ff" opacity="0.33"/><rect x="57.2" y="273.42" width="3.9" height="1.5" fill="#d4d4d4" opacity="0.33"/><rect x="62.1" y="273.42" width="7.8" height="1.5" fill="#8f9aa5" opacity="0.33"/><rect x="13.0" y="275.38" width="9.8" height="1.5" fill="#d4d4d4" opacity="0.33"/><rect x="23.8" y="275.38" width="8.8" height="1.5" fill="#569cd6" opacity="0.33"/><rect x="33.6" y="275.38" width="7.8" height="1.5" fill="#8f9aa5" opacity="0.33"/><rect x="13.0" y="277.34" width="17.6" height="1.5" fill="#d4d4d4" opacity="0.33"/><rect x="31.6" y="277.34" width="8.8" height="1.5" fill="#d4d4d4" opacity="0.33"/><rect x="41.5" y="277.34" width="7.8" height="1.5" fill="#8f9aa5" opacity="0.33"/><rect x="13.0" y="279.30" width="8.8" height="1.5" fill="#d4d4d4" opacity="0.33"/><rect x="22.8" y="279.30" width="3.9" height="1.5" fill="#569cd6" opacity="0.33"/><rect x="27.7" y="279.30" width="7.8" height="1.5" fill="#8f9aa5" opacity="0.33"/><rect x="13.0" y="281.26" width="19.6" height="1.5" fill="#d4d4d4" opacity="0.33"/><rect x="33.6" y="281.26" width="8.8" height="1.5" fill="#569cd6" opacity="0.33"/><rect x="43.4" y="281.26" width="7.8" height="1.5" fill="#8f9aa5" opacity="0.33"/><rect x="13.0" y="283.22" width="8.8" height="1.5" fill="#d4d4d4" opacity="0.33"/><rect x="22.8" y="283.22" width="8.8" height="1.5" fill="#569cd6" opacity="0.33"/><rect x="32.6" y="283.22" width="7.8" height="1.5" fill="#8f9aa5" opacity="0.33"/><rect x="13.0" y="285.18" width="19.6" height="1.5" fill="#d4d4d4" opacity="0.33"/><rect x="33.6" y="285.18" width="8.8" height="1.5" fill="#569cd6" opacity="0.33"/><rect x="43.4" y="285.18" width="7.8" height="1.5" fill="#8f9aa5" opacity="0.33"/><rect x="13.0" y="287.14" width="19.6" height="1.5" fill="#d4d4d4" opacity="0.33"/><rect x="33.6" y="287.14" width="2.9" height="1.5" fill="#569cd6" opacity="0.33"/><rect x="37.5" y="287.14" width="7.8" height="1.5" fill="#8f9aa5" opacity="0.33"/><rect x="13.0" y="289.10" width="14.7" height="1.5" fill="#d4d4d4" opacity="0.33"/><rect x="28.7" y="289.10" width="8.8" height="1.5" fill="#569cd6" opacity="0.33"/><rect x="38.5" y="289.10" width="7.8" height="1.5" fill="#8f9aa5" opacity="0.33"/><rect x="13.0" y="291.06" width="17.6" height="1.5" fill="#d4d4d4" opacity="0.33"/><rect x="31.6" y="291.06" width="4.9" height="1.5" fill="#569cd6" opacity="0.33"/><rect x="37.5" y="291.06" width="7.8" height="1.5" fill="#8f9aa5" opacity="0.33"/><rect x="13.0" y="293.02" width="14.7" height="1.5" fill="#d4d4d4" opacity="0.33"/><rect x="28.7" y="293.02" width="6.9" height="1.5" fill="#569cd6" opacity="0.33"/><rect x="36.6" y="293.02" width="7.8" height="1.5" fill="#8f9aa5" opacity="0.33"/><rect x="13.0" y="294.98" width="10.8" height="1.5" fill="#569cd6" opacity="0.33"/><rect x="24.8" y="294.98" width="25.5" height="1.5" fill="#d4d4d4" opacity="0.33"/><rect x="13.0" y="296.94" width="2.0" height="1.5" fill="#ffd700" opacity="0.33"/><rect x="13.0" y="300.86" width="5.9" height="1.5" fill="#569cd6" opacity="0.33"/><rect x="19.9" y="300.86" width="4.9" height="1.5" fill="#569cd6" opacity="0.33"/><rect x="25.8" y="300.86" width="26.5" height="1.5" fill="#d4d4d4" opacity="0.33"/><rect x="53.2" y="300.86" width="1.0" height="1.5" fill="#ffd700" opacity="0.33"/><rect x="13.0" y="302.82" width="10.8" height="1.5" fill="#d4d4d4" opacity="0.33"/><rect x="24.8" y="302.82" width="8.8" height="1.5" fill="#569cd6" opacity="0.33"/><rect x="34.6" y="302.82" width="7.8" height="1.5" fill="#8f9aa5" opacity="0.33"/><rect x="13.0" y="304.78" width="18.6" height="1.5" fill="#d4d4d4" opacity="0.33"/><rect x="32.6" y="304.78" width="2.9" height="1.5" fill="#d4d4d4" opacity="0.33"/><rect x="36.6" y="304.78" width="7.8" height="1.5" fill="#8f9aa5" opacity="0.33"/><rect x="45.4" y="304.78" width="6.9" height="1.5" fill="#569cd6" opacity="0.33"/><rect x="53.3" y="304.78" width="6.9" height="1.5" fill="#ff40ff" opacity="0.33"/><rect x="61.1" y="304.78" width="3.9" height="1.5" fill="#d4d4d4" opacity="0.33"/><rect x="66.0" y="304.78" width="7.8" height="1.5" fill="#8f9aa5" opacity="0.33"/><rect x="13.0" y="306.74" width="5.9" height="1.5" fill="#d4d4d4" opacity="0.33"/><rect x="19.9" y="306.74" width="2.9" height="1.5" fill="#d4d4d4" opacity="0.33"/><rect x="23.8" y="306.74" width="7.8" height="1.5" fill="#8f9aa5" opacity="0.33"/><rect x="32.7" y="306.74" width="6.9" height="1.5" fill="#569cd6" opacity="0.33"/><rect x="40.5" y="306.74" width="6.9" height="1.5" fill="#ff40ff" opacity="0.33"/><rect x="48.4" y="306.74" width="3.9" height="1.5" fill="#d4d4d4" opacity="0.33"/><rect x="53.3" y="306.74" width="7.8" height="1.5" fill="#8f9aa5" opacity="0.33"/><rect x="13.0" y="308.70" width="12.7" height="1.5" fill="#d4d4d4" opacity="0.33"/><rect x="26.7" y="308.70" width="2.9" height="1.5" fill="#569cd6" opacity="0.33"/><rect x="30.7" y="308.70" width="7.8" height="1.5" fill="#8f9aa5" opacity="0.33"/><rect x="13.0" y="310.66" width="6.9" height="1.5" fill="#d4d4d4" opacity="0.33"/><rect x="20.9" y="310.66" width="6.9" height="1.5" fill="#d4d4d4" opacity="0.33"/><rect x="28.7" y="310.66" width="7.8" height="1.5" fill="#8f9aa5" opacity="0.33"/><rect x="37.6" y="310.66" width="6.9" height="1.5" fill="#569cd6" opacity="0.33"/><rect x="45.4" y="310.66" width="6.9" height="1.5" fill="#ff40ff" opacity="0.33"/><rect x="53.3" y="310.66" width="3.9" height="1.5" fill="#d4d4d4" opacity="0.33"/><rect x="58.2" y="310.66" width="7.8" height="1.5" fill="#8f9aa5" opacity="0.33"/><rect x="13.0" y="312.62" width="10.8" height="1.5" fill="#569cd6" opacity="0.33"/><rect x="24.8" y="312.62" width="25.5" height="1.5" fill="#d4d4d4" opacity="0.33"/><rect x="13.0" y="314.58" width="2.0" height="1.5" fill="#ffd700" opacity="0.33"/><rect x="13.0" y="318.50" width="5.9" height="1.5" fill="#569cd6" opacity="0.33"/><rect x="19.9" y="318.50" width="4.9" height="1.5" fill="#569cd6" opacity="0.33"/><rect x="25.8" y="318.50" width="28.4" height="1.5" fill="#d4d4d4" opacity="0.33"/><rect x="55.2" y="318.50" width="1.0" height="1.5" fill="#ffd700" opacity="0.33"/><rect x="13.0" y="320.46" width="10.8" height="1.5" fill="#569cd6" opacity="0.33"/><rect x="24.8" y="320.46" width="58.8" height="1.5" fill="#d4d4d4" opacity="0.33"/><rect x="84.6" y="320.46" width="9.8" height="1.5" fill="#569cd6" opacity="0.33"/><rect x="13.0" y="322.42" width="10.8" height="1.5" fill="#569cd6" opacity="0.33"/><rect x="24.8" y="322.42" width="49.0" height="1.5" fill="#d4d4d4" opacity="0.33"/><rect x="74.8" y="322.42" width="9.8" height="1.5" fill="#569cd6" opacity="0.33"/><rect x="13.0" y="324.38" width="10.8" height="1.5" fill="#569cd6" opacity="0.33"/><rect x="24.8" y="324.38" width="58.8" height="1.5" fill="#d4d4d4" opacity="0.33"/><rect x="84.6" y="324.38" width="9.8" height="1.5" fill="#569cd6" opacity="0.33"/><rect x="13.0" y="326.34" width="10.8" height="1.5" fill="#569cd6" opacity="0.33"/><rect x="24.8" y="326.34" width="43.1" height="1.5" fill="#d4d4d4" opacity="0.33"/><rect x="68.9" y="326.34" width="9.8" height="1.5" fill="#569cd6" opacity="0.33"/><rect x="13.0" y="328.30" width="10.8" height="1.5" fill="#569cd6" opacity="0.33"/><rect x="24.8" y="328.30" width="60.8" height="1.5" fill="#d4d4d4" opacity="0.33"/><rect x="86.5" y="328.30" width="9.8" height="1.5" fill="#569cd6" opacity="0.33"/></svg>
<div style="position:absolute;left:1725px;top:919px;width:1px;height:333px;background:#3c3c3c;"></div>
<div style="position:absolute;left:0px;top:1291px;width:1776px;height:1px;background:#2b2b2b;"></div>
<svg style="position:absolute;left:1690px;top:1296px;" width="26" height="23" viewBox="0 0 26 23"><g fill="none" stroke="#d4d4d4" stroke-width="1.5"><circle cx="9.2" cy="6.9" r="3.9"/><circle cx="17" cy="6.9" r="3.9"/><path d="M5.6,9.6 C3.2,10.2 2.2,11.8 2.2,14 C2.2,17.5 7,20.3 13.1,20.3 C19.2,20.3 24,17.5 24,14 C24,11.8 23,10.2 20.6,9.6"/><path d="M6.5,10.5 V16.5 M19.7,10.5 V16.5 M6.5,11.2 H19.7"/></g><rect x="10.6" y="13" width="1.9" height="4" fill="#d4d4d4"/><rect x="13.8" y="13" width="1.9" height="4" fill="#d4d4d4"/></svg>
<svg style="position:absolute;left:1738px;top:1295px;" width="24" height="25" viewBox="0 0 24 25"><path d="M10.5,3.6 C6.5,4 3.8,7 3.8,11.5 V15.5 L1.8,19.3 H19 L17.3,15.5 V12.5" fill="none" stroke="#d4d4d4" stroke-width="1.5" stroke-linejoin="round"/><path d="M8,20.3 L10.4,22.3 L12.8,20.3 Z" fill="#d4d4d4"/><circle cx="15.2" cy="6.9" r="4" fill="#d4d4d4"/></svg>
</body></html>
